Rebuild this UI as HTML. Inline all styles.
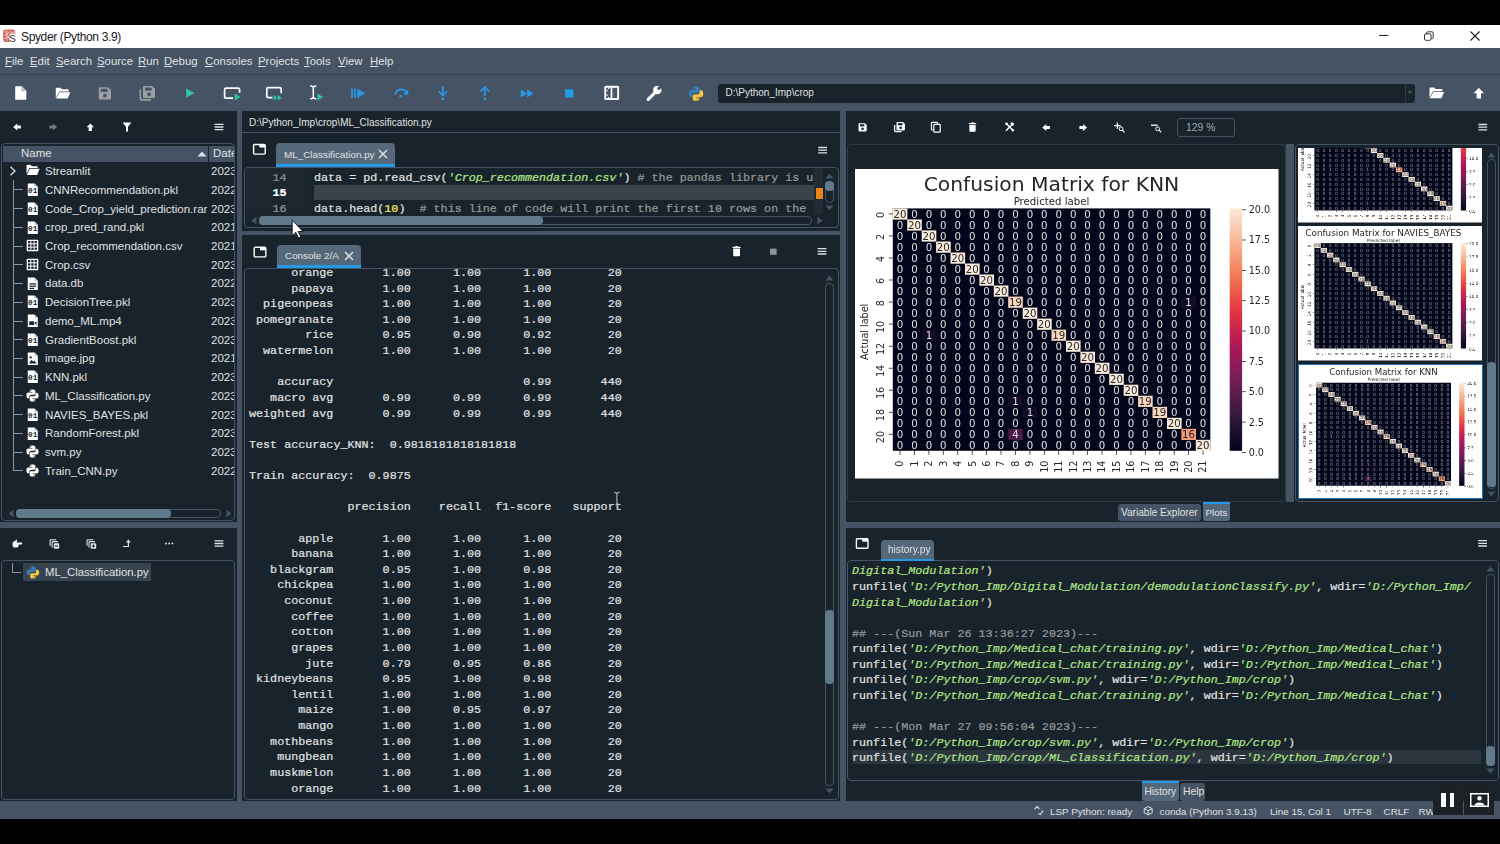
<!DOCTYPE html><html><head><meta charset="utf-8"><title>Spyder (Python 3.9)</title><style>
*{box-sizing:border-box;margin:0;padding:0}
html,body{width:1500px;height:844px;overflow:hidden;background:#000}
body{position:relative;font-family:"Liberation Sans",sans-serif;font-size:12px;color:#E0E1E3}
.a{position:absolute}
.t{position:absolute;white-space:pre;line-height:1}
.ui{font-family:"Liberation Sans",sans-serif;font-size:11.5px;color:#E0E1E3}
.mono{font-family:"Liberation Mono",monospace;font-size:11.72px;-webkit-text-stroke:0.22px;color:#E0E1E3;white-space:pre;position:absolute;line-height:15.6px;height:15.6px}
.box{position:absolute;border:1px solid #455364;border-radius:4px;background:#18232B}
.str{color:#B0E686;font-style:italic}
.num{color:#FAED5C}
.cm{color:#999999}
svg{position:absolute;overflow:visible}
.fig{will-change:transform}
</style></head><body>
<div class="a" style="left:0;top:25px;width:1500px;height:23px;background:#fff"></div>
<div class="t" style="left:21px;top:30.8px;font-size:12px;letter-spacing:-0.36px;color:#1a1a1a">Spyder (Python 3.9)</div>
<div class="a" style="left:0;top:48px;width:1500px;height:63px;background:#455364"></div>
<div class="a" style="left:0;top:74px;width:1500px;height:1px;background:#37434f"></div>
<div class="t ui" style="left:5px;top:56.3px;font-size:11.4px"><u>F</u>ile</div>
<div class="t ui" style="left:30px;top:56.3px;font-size:11.4px"><u>E</u>dit</div>
<div class="t ui" style="left:56px;top:56.3px;font-size:11.4px"><u>S</u>earch</div>
<div class="t ui" style="left:97px;top:56.3px;font-size:11.4px"><u>S</u>ource</div>
<div class="t ui" style="left:138px;top:56.3px;font-size:11.4px"><u>R</u>un</div>
<div class="t ui" style="left:164px;top:56.3px;font-size:11.4px"><u>D</u>ebug</div>
<div class="t ui" style="left:205px;top:56.3px;font-size:11.4px"><u>C</u>onsoles</div>
<div class="t ui" style="left:258px;top:56.3px;font-size:11.4px"><u>P</u>rojects</div>
<div class="t ui" style="left:304px;top:56.3px;font-size:11.4px"><u>T</u>ools</div>
<div class="t ui" style="left:338px;top:56.3px;font-size:11.4px"><u>V</u>iew</div>
<div class="t ui" style="left:370px;top:56.3px;font-size:11.4px"><u>H</u>elp</div>
<div class="a" style="left:0;top:111px;width:1500px;height:690px;background:#18232B"></div>
<div class="a" style="left:0;top:801px;width:1500px;height:17.6px;background:#455364"></div>
<div class="a" style="left:237px;top:111px;width:5px;height:690px;background:#455364"></div>
<div class="a" style="left:840px;top:111px;width:5.7px;height:690px;background:#455364"></div>
<div class="a" style="left:0;top:522px;width:237px;height:5.5px;background:#455364"></div>
<div class="a" style="left:242px;top:230.5px;width:598px;height:4.5px;background:#455364"></div>
<div class="a" style="left:846px;top:522px;width:654px;height:5.5px;background:#455364"></div>
<div class="box" style="left:1px;top:143px;width:234px;height:378px"></div>
<div class="a" style="left:3px;top:146px;width:205px;height:16px;background:#455364"></div>
<div class="a" style="left:209px;top:146px;width:25px;height:16px;background:#455364"></div>
<div class="t ui" style="left:21px;top:148px">Name</div>
<div class="t ui" style="left:213px;top:148px;width:21px;overflow:hidden">Date</div>
<svg style="left:197px;top:151px" width="10" height="6"><path d="M0.5 5.5 L5 0.5 L9.5 5.5Z" fill="#E0E1E3"/></svg>
<svg style="left:26.1px;top:164.4px" width="14" height="12" viewBox="0 0 14 12"><path d="M0.5 1.5 Q0.5 0.8 1.2 0.8 L4.6 0.8 L5.8 2.2 L11 2.2 Q11.6 2.2 11.6 2.9 L11.6 4 L3.2 4 L0.5 10 Z" fill="#fff"/><path d="M3.6 4.8 L13.6 4.8 L11.2 11 L0.9 11 Z" fill="#fff"/></svg>
<div class="t ui" style="left:45px;top:166.1px">Streamlit</div>
<div class="t ui" style="left:211px;top:166.1px;width:23px;overflow:hidden;background:#18232B">2023</div>
<svg style="left:9.2px;top:166.2px" width="8" height="10"><path d="M1.5 0.8 L6 5 L1.5 9.2" fill="none" stroke="#E0E1E3" stroke-width="1.3"/></svg>
<svg style="left:26.1px;top:183.1px" width="13.6" height="13.6" viewBox="0 0 12 13"><path d="M1.2 0.5 L7.6 0.5 L10.8 3.7 L10.8 12.5 L1.2 12.5 Z" fill="#fff"/><path d="M7.6 0.5 L7.6 3.7 L10.8 3.7Z" fill="#b9c0c7"/><text x="1.5" y="9.4" font-family="Liberation Mono,monospace" font-size="7.4" font-weight="bold" fill="#19232D" textLength="9">01</text></svg>
<div class="t ui" style="left:45px;top:184.8px">CNNRecommendation.pkl</div>
<div class="t ui" style="left:211px;top:184.8px;width:23px;overflow:hidden;background:#18232B">2022</div>
<div class="a" style="left:13px;top:189.4px;width:10px;height:1px;background:#8a96a0"></div>
<svg style="left:26.1px;top:201.8px" width="13.6" height="13.6" viewBox="0 0 12 13"><path d="M1.2 0.5 L7.6 0.5 L10.8 3.7 L10.8 12.5 L1.2 12.5 Z" fill="#fff"/><path d="M7.6 0.5 L7.6 3.7 L10.8 3.7Z" fill="#b9c0c7"/><text x="1.5" y="9.4" font-family="Liberation Mono,monospace" font-size="7.4" font-weight="bold" fill="#19232D" textLength="9">01</text></svg>
<div class="t ui" style="left:45px;top:203.5px">Code_Crop_yield_prediction.rar</div>
<div class="t ui" style="left:211px;top:203.5px;width:23px;overflow:hidden;background:#18232B">2023</div>
<div class="a" style="left:13px;top:208.1px;width:10px;height:1px;background:#8a96a0"></div>
<svg style="left:26.1px;top:220.6px" width="13.6" height="13.6" viewBox="0 0 12 13"><path d="M1.2 0.5 L7.6 0.5 L10.8 3.7 L10.8 12.5 L1.2 12.5 Z" fill="#fff"/><path d="M7.6 0.5 L7.6 3.7 L10.8 3.7Z" fill="#b9c0c7"/><text x="1.5" y="9.4" font-family="Liberation Mono,monospace" font-size="7.4" font-weight="bold" fill="#19232D" textLength="9">01</text></svg>
<div class="t ui" style="left:45px;top:222.3px">crop_pred_rand.pkl</div>
<div class="t ui" style="left:211px;top:222.3px;width:23px;overflow:hidden;background:#18232B">2021</div>
<div class="a" style="left:13px;top:226.9px;width:10px;height:1px;background:#8a96a0"></div>
<svg style="left:26.1px;top:239.3px" width="13" height="13" viewBox="0 0 13 13"><rect x="0.7" y="0.7" width="11.6" height="11.6" rx="1" fill="#fff"/><g fill="#19232D"><rect x="2" y="2" width="2.3" height="2.3"/><rect x="5.3" y="2" width="2.3" height="2.3"/><rect x="8.6" y="2" width="2.3" height="2.3"/><rect x="2" y="5.3" width="2.3" height="2.3"/><rect x="5.3" y="5.3" width="2.3" height="2.3"/><rect x="8.6" y="5.3" width="2.3" height="2.3"/><rect x="2" y="8.6" width="2.3" height="2.3"/><rect x="5.3" y="8.6" width="2.3" height="2.3"/><rect x="8.6" y="8.6" width="2.3" height="2.3"/></g></svg>
<div class="t ui" style="left:45px;top:241.0px">Crop_recommendation.csv</div>
<div class="t ui" style="left:211px;top:241.0px;width:23px;overflow:hidden;background:#18232B">2021</div>
<div class="a" style="left:13px;top:245.6px;width:10px;height:1px;background:#8a96a0"></div>
<svg style="left:26.1px;top:258.0px" width="13" height="13" viewBox="0 0 13 13"><rect x="0.7" y="0.7" width="11.6" height="11.6" rx="1" fill="#fff"/><g fill="#19232D"><rect x="2" y="2" width="2.3" height="2.3"/><rect x="5.3" y="2" width="2.3" height="2.3"/><rect x="8.6" y="2" width="2.3" height="2.3"/><rect x="2" y="5.3" width="2.3" height="2.3"/><rect x="5.3" y="5.3" width="2.3" height="2.3"/><rect x="8.6" y="5.3" width="2.3" height="2.3"/><rect x="2" y="8.6" width="2.3" height="2.3"/><rect x="5.3" y="8.6" width="2.3" height="2.3"/><rect x="8.6" y="8.6" width="2.3" height="2.3"/></g></svg>
<div class="t ui" style="left:45px;top:259.7px">Crop.csv</div>
<div class="t ui" style="left:211px;top:259.7px;width:23px;overflow:hidden;background:#18232B">2023</div>
<div class="a" style="left:13px;top:264.3px;width:10px;height:1px;background:#8a96a0"></div>
<svg style="left:26.1px;top:276.7px" width="13.6" height="13.6" viewBox="0 0 12 13"><path d="M1.2 0.5 L7.6 0.5 L10.8 3.7 L10.8 12.5 L1.2 12.5 Z" fill="#fff"/><path d="M7.6 0.5 L7.6 3.7 L10.8 3.7Z" fill="#b9c0c7"/><g fill="#19232D"><rect x="2.8" y="6" width="6.4" height="1.2"/><rect x="2.8" y="8.2" width="6.4" height="1.2"/><rect x="2.8" y="10.3" width="4.5" height="1.2"/></g></svg>
<div class="t ui" style="left:45px;top:278.4px">data.db</div>
<div class="t ui" style="left:211px;top:278.4px;width:23px;overflow:hidden;background:#18232B">2022</div>
<div class="a" style="left:13px;top:283.0px;width:10px;height:1px;background:#8a96a0"></div>
<svg style="left:26.1px;top:295.4px" width="13.6" height="13.6" viewBox="0 0 12 13"><path d="M1.2 0.5 L7.6 0.5 L10.8 3.7 L10.8 12.5 L1.2 12.5 Z" fill="#fff"/><path d="M7.6 0.5 L7.6 3.7 L10.8 3.7Z" fill="#b9c0c7"/><text x="1.5" y="9.4" font-family="Liberation Mono,monospace" font-size="7.4" font-weight="bold" fill="#19232D" textLength="9">01</text></svg>
<div class="t ui" style="left:45px;top:297.1px">DecisionTree.pkl</div>
<div class="t ui" style="left:211px;top:297.1px;width:23px;overflow:hidden;background:#18232B">2023</div>
<div class="a" style="left:13px;top:301.7px;width:10px;height:1px;background:#8a96a0"></div>
<svg style="left:26.1px;top:314.2px" width="13.6" height="13.6" viewBox="0 0 12 13"><path d="M1.2 0.5 L7.6 0.5 L10.8 3.7 L10.8 12.5 L1.2 12.5 Z" fill="#fff"/><path d="M7.6 0.5 L7.6 3.7 L10.8 3.7Z" fill="#b9c0c7"/><g fill="#19232D"><rect x="2.6" y="7" width="4.6" height="3.6"/><path d="M7.4 8.6 L9.6 7 L9.6 10.6Z"/></g></svg>
<div class="t ui" style="left:45px;top:315.9px">demo_ML.mp4</div>
<div class="t ui" style="left:211px;top:315.9px;width:23px;overflow:hidden;background:#18232B">2023</div>
<div class="a" style="left:13px;top:320.5px;width:10px;height:1px;background:#8a96a0"></div>
<svg style="left:26.1px;top:332.9px" width="13.6" height="13.6" viewBox="0 0 12 13"><path d="M1.2 0.5 L7.6 0.5 L10.8 3.7 L10.8 12.5 L1.2 12.5 Z" fill="#fff"/><path d="M7.6 0.5 L7.6 3.7 L10.8 3.7Z" fill="#b9c0c7"/><text x="1.5" y="9.4" font-family="Liberation Mono,monospace" font-size="7.4" font-weight="bold" fill="#19232D" textLength="9">01</text></svg>
<div class="t ui" style="left:45px;top:334.6px">GradientBoost.pkl</div>
<div class="t ui" style="left:211px;top:334.6px;width:23px;overflow:hidden;background:#18232B">2023</div>
<div class="a" style="left:13px;top:339.2px;width:10px;height:1px;background:#8a96a0"></div>
<svg style="left:26.1px;top:351.6px" width="13.6" height="13.6" viewBox="0 0 12 13"><path d="M1.2 0.5 L7.6 0.5 L10.8 3.7 L10.8 12.5 L1.2 12.5 Z" fill="#fff"/><path d="M7.6 0.5 L7.6 3.7 L10.8 3.7Z" fill="#b9c0c7"/><g fill="#19232D"><path d="M2.4 11 L4.8 7.4 L6.4 9.4 L7.6 8.2 L9.6 11Z"/><circle cx="4" cy="5.2" r="1.1"/></g></svg>
<div class="t ui" style="left:45px;top:353.3px">image.jpg</div>
<div class="t ui" style="left:211px;top:353.3px;width:23px;overflow:hidden;background:#18232B">2021</div>
<div class="a" style="left:13px;top:357.9px;width:10px;height:1px;background:#8a96a0"></div>
<svg style="left:26.1px;top:370.3px" width="13.6" height="13.6" viewBox="0 0 12 13"><path d="M1.2 0.5 L7.6 0.5 L10.8 3.7 L10.8 12.5 L1.2 12.5 Z" fill="#fff"/><path d="M7.6 0.5 L7.6 3.7 L10.8 3.7Z" fill="#b9c0c7"/><text x="1.5" y="9.4" font-family="Liberation Mono,monospace" font-size="7.4" font-weight="bold" fill="#19232D" textLength="9">01</text></svg>
<div class="t ui" style="left:45px;top:372.0px">KNN.pkl</div>
<div class="t ui" style="left:211px;top:372.0px;width:23px;overflow:hidden;background:#18232B">2023</div>
<div class="a" style="left:13px;top:376.6px;width:10px;height:1px;background:#8a96a0"></div>
<svg style="left:26.1px;top:389.0px" width="13" height="13" viewBox="0 0 13 13"><path d="M6.3 0.4 C3.6 0.4 3.8 1.6 3.8 1.6 L3.8 3 L6.5 3 L6.5 3.5 L2.4 3.5 C0.6 3.5 0.4 5 0.4 6.4 C0.4 7.9 0.8 9.3 2.3 9.3 L3.4 9.3 L3.4 7.6 C3.4 6.4 4.4 5.7 5.4 5.7 L7.8 5.7 C8.8 5.7 9.3 5 9.3 4.2 L9.3 1.8 C9.3 1 8.4 0.4 6.3 0.4Z M4.9 1.3 A0.55 0.55 0 1 1 4.9 2.4 A0.55 0.55 0 1 1 4.9 1.3Z" fill="#fff" fill-rule="evenodd"/><path d="M6.7 12.6 C9.4 12.6 9.2 11.4 9.2 11.4 L9.2 10 L6.5 10 L6.5 9.5 L10.6 9.5 C12.4 9.5 12.6 8 12.6 6.6 C12.6 5.1 12.2 3.7 10.7 3.7 L9.6 3.7 L9.6 5.4 C9.6 6.6 8.6 7.3 7.6 7.3 L5.2 7.3 C4.2 7.3 3.7 8 3.7 8.8 L3.7 11.2 C3.7 12 4.6 12.6 6.7 12.6Z M8.1 11.7 A0.55 0.55 0 1 1 8.1 10.6 A0.55 0.55 0 1 1 8.1 11.7Z" fill="#fff" fill-rule="evenodd"/></svg>
<div class="t ui" style="left:45px;top:390.7px">ML_Classification.py</div>
<div class="t ui" style="left:211px;top:390.7px;width:23px;overflow:hidden;background:#18232B">2023</div>
<div class="a" style="left:13px;top:395.3px;width:10px;height:1px;background:#8a96a0"></div>
<svg style="left:26.1px;top:407.8px" width="13.6" height="13.6" viewBox="0 0 12 13"><path d="M1.2 0.5 L7.6 0.5 L10.8 3.7 L10.8 12.5 L1.2 12.5 Z" fill="#fff"/><path d="M7.6 0.5 L7.6 3.7 L10.8 3.7Z" fill="#b9c0c7"/><text x="1.5" y="9.4" font-family="Liberation Mono,monospace" font-size="7.4" font-weight="bold" fill="#19232D" textLength="9">01</text></svg>
<div class="t ui" style="left:45px;top:409.5px">NAVIES_BAYES.pkl</div>
<div class="t ui" style="left:211px;top:409.5px;width:23px;overflow:hidden;background:#18232B">2023</div>
<div class="a" style="left:13px;top:414.1px;width:10px;height:1px;background:#8a96a0"></div>
<svg style="left:26.1px;top:426.5px" width="13.6" height="13.6" viewBox="0 0 12 13"><path d="M1.2 0.5 L7.6 0.5 L10.8 3.7 L10.8 12.5 L1.2 12.5 Z" fill="#fff"/><path d="M7.6 0.5 L7.6 3.7 L10.8 3.7Z" fill="#b9c0c7"/><text x="1.5" y="9.4" font-family="Liberation Mono,monospace" font-size="7.4" font-weight="bold" fill="#19232D" textLength="9">01</text></svg>
<div class="t ui" style="left:45px;top:428.2px">RandomForest.pkl</div>
<div class="t ui" style="left:211px;top:428.2px;width:23px;overflow:hidden;background:#18232B">2023</div>
<div class="a" style="left:13px;top:432.8px;width:10px;height:1px;background:#8a96a0"></div>
<svg style="left:26.1px;top:445.2px" width="13" height="13" viewBox="0 0 13 13"><path d="M6.3 0.4 C3.6 0.4 3.8 1.6 3.8 1.6 L3.8 3 L6.5 3 L6.5 3.5 L2.4 3.5 C0.6 3.5 0.4 5 0.4 6.4 C0.4 7.9 0.8 9.3 2.3 9.3 L3.4 9.3 L3.4 7.6 C3.4 6.4 4.4 5.7 5.4 5.7 L7.8 5.7 C8.8 5.7 9.3 5 9.3 4.2 L9.3 1.8 C9.3 1 8.4 0.4 6.3 0.4Z M4.9 1.3 A0.55 0.55 0 1 1 4.9 2.4 A0.55 0.55 0 1 1 4.9 1.3Z" fill="#fff" fill-rule="evenodd"/><path d="M6.7 12.6 C9.4 12.6 9.2 11.4 9.2 11.4 L9.2 10 L6.5 10 L6.5 9.5 L10.6 9.5 C12.4 9.5 12.6 8 12.6 6.6 C12.6 5.1 12.2 3.7 10.7 3.7 L9.6 3.7 L9.6 5.4 C9.6 6.6 8.6 7.3 7.6 7.3 L5.2 7.3 C4.2 7.3 3.7 8 3.7 8.8 L3.7 11.2 C3.7 12 4.6 12.6 6.7 12.6Z M8.1 11.7 A0.55 0.55 0 1 1 8.1 10.6 A0.55 0.55 0 1 1 8.1 11.7Z" fill="#fff" fill-rule="evenodd"/></svg>
<div class="t ui" style="left:45px;top:446.9px">svm.py</div>
<div class="t ui" style="left:211px;top:446.9px;width:23px;overflow:hidden;background:#18232B">2023</div>
<div class="a" style="left:13px;top:451.5px;width:10px;height:1px;background:#8a96a0"></div>
<svg style="left:26.1px;top:463.9px" width="13" height="13" viewBox="0 0 13 13"><path d="M6.3 0.4 C3.6 0.4 3.8 1.6 3.8 1.6 L3.8 3 L6.5 3 L6.5 3.5 L2.4 3.5 C0.6 3.5 0.4 5 0.4 6.4 C0.4 7.9 0.8 9.3 2.3 9.3 L3.4 9.3 L3.4 7.6 C3.4 6.4 4.4 5.7 5.4 5.7 L7.8 5.7 C8.8 5.7 9.3 5 9.3 4.2 L9.3 1.8 C9.3 1 8.4 0.4 6.3 0.4Z M4.9 1.3 A0.55 0.55 0 1 1 4.9 2.4 A0.55 0.55 0 1 1 4.9 1.3Z" fill="#fff" fill-rule="evenodd"/><path d="M6.7 12.6 C9.4 12.6 9.2 11.4 9.2 11.4 L9.2 10 L6.5 10 L6.5 9.5 L10.6 9.5 C12.4 9.5 12.6 8 12.6 6.6 C12.6 5.1 12.2 3.7 10.7 3.7 L9.6 3.7 L9.6 5.4 C9.6 6.6 8.6 7.3 7.6 7.3 L5.2 7.3 C4.2 7.3 3.7 8 3.7 8.8 L3.7 11.2 C3.7 12 4.6 12.6 6.7 12.6Z M8.1 11.7 A0.55 0.55 0 1 1 8.1 10.6 A0.55 0.55 0 1 1 8.1 11.7Z" fill="#fff" fill-rule="evenodd"/></svg>
<div class="t ui" style="left:45px;top:465.6px">Train_CNN.py</div>
<div class="t ui" style="left:211px;top:465.6px;width:23px;overflow:hidden;background:#18232B">2022</div>
<div class="a" style="left:13px;top:470.2px;width:10px;height:1px;background:#8a96a0"></div>
<div class="a" style="left:12.6px;top:180px;width:1px;height:290.7px;background:#8a96a0"></div>
<svg style="left:8px;top:509px" width="6" height="9"><path d="M5.5 0.5 L0.5 4.5 L5.5 8.5Z" fill="#455364"/></svg>
<svg style="left:226px;top:509px" width="6" height="9"><path d="M0.5 0.5 L5.5 4.5 L0.5 8.5Z" fill="#455364"/></svg>
<div class="a" style="left:16px;top:509px;width:205px;height:9px;border:1px solid #455364;border-radius:4px"></div>
<div class="a" style="left:16px;top:509px;width:155px;height:9px;background:#60798B;border-radius:4px"></div>
<div class="box" style="left:1px;top:560px;width:234px;height:240px"></div>
<div class="a" style="left:23px;top:563.2px;width:128px;height:18.3px;background:#37434F"></div>
<div class="a" style="left:12px;top:563px;width:1px;height:10px;background:#8a96a0"></div><div class="a" style="left:12px;top:572px;width:9px;height:1px;background:#8a96a0"></div>
<div class="t ui" style="left:45px;top:567.4px;font-size:11.3px">ML_Classification.py</div>
<div class="t ui" style="left:249px;top:117.7px;font-size:10px">D:\Python_Imp\crop\ML_Classification.py</div>
<div class="a" style="left:242px;top:132px;width:598px;height:1px;background:#455364"></div>
<div class="a" style="left:276px;top:143px;width:119px;height:24px;background:#54687A;border-radius:4px 4px 0 0;border-bottom:3px solid #259AE9"></div>
<div class="t ui" style="left:284px;top:149.5px;font-size:9.9px">ML_Classification.py</div>
<svg style="left:378px;top:149px" width="10" height="10"><path d="M1 1 L9 9 M9 1 L1 9" stroke="#E0E1E3" stroke-width="1.5"/></svg>
<div class="box" style="left:244px;top:167px;width:595px;height:61px"></div>
<div class="a" style="left:245px;top:168px;width:66px;height:46.5px;background:#1c2730;border-radius:3px 0 0 0"></div>
<div class="a" style="left:314px;top:185px;width:507px;height:15.3px;background:#3a434a"></div>
<div class="mono" style="left:245px;top:171.2px;width:41.5px;text-align:right;color:#8b949c">14</div>
<div class="mono" style="left:245px;top:186.2px;width:41.5px;text-align:right;color:#fff;font-weight:bold">15</div>
<div class="mono" style="left:245px;top:202.2px;width:41.5px;text-align:right;color:#8b949c">16</div>
<div class="mono" style="left:314px;top:171.2px;width:500px;overflow:hidden">data = pd.read_csv(<span class="str">'Crop_recommendation.csv'</span>) <span class="cm"># the pandas library is used</span></div>
<div class="mono" style="left:314px;top:202.2px;width:494px;overflow:hidden">data.head(<span class="num">10</span>)  <span class="cm"># this line of code will print the first 10 rows on the screen</span></div>
<div class="a" style="left:813.7px;top:168px;width:9.8px;height:46px;background:#212b33"></div>
<div class="a" style="left:815.5px;top:188px;width:7px;height:11px;background:#E8861A"></div>
<svg style="left:825px;top:173px" width="9" height="6"><path d="M0.5 5.5 L4.5 0.5 L8.5 5.5Z" fill="#455364"/></svg>
<svg style="left:825px;top:205px" width="9" height="6"><path d="M0.5 0.5 L4.5 5.5 L8.5 0.5Z" fill="#455364"/></svg>
<div class="a" style="left:825px;top:181px;width:9px;height:22px;border:1px solid #455364;border-radius:4px"></div>
<div class="a" style="left:825px;top:181px;width:9px;height:9.5px;background:#60798B;border-radius:4px"></div>
<svg style="left:251px;top:216px" width="6" height="9"><path d="M5.5 0.5 L0.5 4.5 L5.5 8.5Z" fill="#455364"/></svg>
<svg style="left:817px;top:216px" width="6" height="9"><path d="M0.5 0.5 L5.5 4.5 L0.5 8.5Z" fill="#455364"/></svg>
<div class="a" style="left:259px;top:216px;width:553px;height:9px;border:1px solid #455364;border-radius:4px"></div>
<div class="a" style="left:259px;top:216px;width:284px;height:9px;background:#60798B;border-radius:4px"></div>
<div class="a" style="left:277px;top:245px;width:84px;height:23px;background:#54687A;border-radius:4px 4px 0 0;border-bottom:3px solid #259AE9"></div>
<div class="t ui" style="left:285px;top:251px;font-size:9.9px">Console 2/A</div>
<svg style="left:344px;top:251px" width="10" height="10"><path d="M1 1 L9 9 M9 1 L1 9" stroke="#E0E1E3" stroke-width="1.5"/></svg>
<div class="box" style="left:244px;top:268px;width:595px;height:532px"></div>
<div class="a" style="left:245px;top:269px;width:575px;height:530px;overflow:hidden">
<div class="mono" style="left:4px;top:-3.1px">      orange       1.00      1.00      1.00        20</div>
<div class="mono" style="left:4px;top:12.5px">      papaya       1.00      1.00      1.00        20</div>
<div class="mono" style="left:4px;top:28.1px">  pigeonpeas       1.00      1.00      1.00        20</div>
<div class="mono" style="left:4px;top:43.8px"> pomegranate       1.00      1.00      1.00        20</div>
<div class="mono" style="left:4px;top:59.4px">        rice       0.95      0.90      0.92        20</div>
<div class="mono" style="left:4px;top:75.0px">  watermelon       1.00      1.00      1.00        20</div>
<div class="mono" style="left:4px;top:106.3px">    accuracy                           0.99       440</div>
<div class="mono" style="left:4px;top:121.9px">   macro avg       0.99      0.99      0.99       440</div>
<div class="mono" style="left:4px;top:137.5px">weighted avg       0.99      0.99      0.99       440</div>
<div class="mono" style="left:4px;top:168.8px">Test accuracy_KNN:  0.9818181818181818</div>
<div class="mono" style="left:4px;top:200.0px">Train accuracy:  0.9875</div>
<div class="mono" style="left:4px;top:231.3px">              precision    recall  f1-score   support</div>
<div class="mono" style="left:4px;top:262.5px">       apple       1.00      1.00      1.00        20</div>
<div class="mono" style="left:4px;top:278.2px">      banana       1.00      1.00      1.00        20</div>
<div class="mono" style="left:4px;top:293.8px">   blackgram       0.95      1.00      0.98        20</div>
<div class="mono" style="left:4px;top:309.4px">    chickpea       1.00      1.00      1.00        20</div>
<div class="mono" style="left:4px;top:325.0px">     coconut       1.00      1.00      1.00        20</div>
<div class="mono" style="left:4px;top:340.7px">      coffee       1.00      1.00      1.00        20</div>
<div class="mono" style="left:4px;top:356.3px">      cotton       1.00      1.00      1.00        20</div>
<div class="mono" style="left:4px;top:371.9px">      grapes       1.00      1.00      1.00        20</div>
<div class="mono" style="left:4px;top:387.5px">        jute       0.79      0.95      0.86        20</div>
<div class="mono" style="left:4px;top:403.2px"> kidneybeans       0.95      1.00      0.98        20</div>
<div class="mono" style="left:4px;top:418.8px">      lentil       1.00      1.00      1.00        20</div>
<div class="mono" style="left:4px;top:434.4px">       maize       1.00      0.95      0.97        20</div>
<div class="mono" style="left:4px;top:450.0px">       mango       1.00      1.00      1.00        20</div>
<div class="mono" style="left:4px;top:465.7px">   mothbeans       1.00      1.00      1.00        20</div>
<div class="mono" style="left:4px;top:481.3px">    mungbean       1.00      1.00      1.00        20</div>
<div class="mono" style="left:4px;top:496.9px">   muskmelon       1.00      1.00      1.00        20</div>
<div class="mono" style="left:4px;top:512.5px">      orange       1.00      1.00      1.00        20</div>
</div>
<svg style="left:825px;top:275px" width="9" height="6"><path d="M0.5 5.5 L4.5 0.5 L8.5 5.5Z" fill="#455364"/></svg>
<svg style="left:825px;top:788px" width="9" height="6"><path d="M0.5 0.5 L4.5 5.5 L8.5 0.5Z" fill="#455364"/></svg>
<div class="a" style="left:825px;top:283px;width:9px;height:503px;border:1px solid #455364;border-radius:4px"></div>
<div class="a" style="left:825px;top:610px;width:9px;height:74px;background:#60798B;border-radius:4px"></div>
<div class="box" style="left:847px;top:144px;width:439px;height:358px;border-radius:4px;border-color:#2d3a47"></div>
<svg class="fig" style="left:854.5px;top:168.5px" width="423.5" height="309.5" viewBox="0 0 423.5 309.5"><rect width="423.5" height="309.5" fill="#fff"/>
<rect x="37.8" y="39.4" width="317.5" height="242.4" fill="#03051a"/>
<rect x="37.8" y="39.4" width="14.6" height="11.2" fill="#faebdd"/>
<rect x="52.2" y="50.4" width="14.6" height="11.2" fill="#faebdd"/>
<rect x="66.7" y="61.4" width="14.6" height="11.2" fill="#faebdd"/>
<rect x="81.1" y="72.5" width="14.6" height="11.2" fill="#faebdd"/>
<rect x="95.5" y="83.5" width="14.6" height="11.2" fill="#faebdd"/>
<rect x="110.0" y="94.5" width="14.6" height="11.2" fill="#faebdd"/>
<rect x="124.4" y="105.5" width="14.6" height="11.2" fill="#faebdd"/>
<rect x="138.8" y="116.5" width="14.6" height="11.2" fill="#faebdd"/>
<rect x="153.2" y="127.6" width="14.6" height="11.2" fill="#f9d8c2"/>
<rect x="167.7" y="138.6" width="14.6" height="11.2" fill="#faebdd"/>
<rect x="182.1" y="149.6" width="14.6" height="11.2" fill="#faebdd"/>
<rect x="196.5" y="160.6" width="14.6" height="11.2" fill="#f9d8c2"/>
<rect x="211.0" y="171.6" width="14.6" height="11.2" fill="#faebdd"/>
<rect x="225.4" y="182.7" width="14.6" height="11.2" fill="#faebdd"/>
<rect x="239.8" y="193.7" width="14.6" height="11.2" fill="#faebdd"/>
<rect x="254.2" y="204.7" width="14.6" height="11.2" fill="#faebdd"/>
<rect x="268.7" y="215.7" width="14.6" height="11.2" fill="#faebdd"/>
<rect x="283.1" y="226.7" width="14.6" height="11.2" fill="#f9d8c2"/>
<rect x="297.5" y="237.8" width="14.6" height="11.2" fill="#f9d8c2"/>
<rect x="312.0" y="248.8" width="14.6" height="11.2" fill="#faebdd"/>
<rect x="326.4" y="259.8" width="14.6" height="11.2" fill="#f59b76"/>
<rect x="340.8" y="270.8" width="14.6" height="11.2" fill="#faebdd"/>
<rect x="326.4" y="127.6" width="14.6" height="11.2" fill="#140c27"/>
<rect x="66.7" y="160.6" width="14.6" height="11.2" fill="#140c27"/>
<rect x="153.2" y="226.7" width="14.6" height="11.2" fill="#140c27"/>
<rect x="167.7" y="237.8" width="14.6" height="11.2" fill="#140c27"/>
<rect x="153.2" y="259.8" width="14.6" height="11.2" fill="#4d1b48"/>
<g font-family="DejaVu Sans,sans-serif" font-size="10.2" text-anchor="middle" fill="#e0e0e0">
<text x="45.0" y="48.7" fill="#262626">20</text>
<text x="59.4" y="48.7">0</text>
<text x="73.9" y="48.7">0</text>
<text x="88.3" y="48.7">0</text>
<text x="102.7" y="48.7">0</text>
<text x="117.2" y="48.7">0</text>
<text x="131.6" y="48.7">0</text>
<text x="146.0" y="48.7">0</text>
<text x="160.5" y="48.7">0</text>
<text x="174.9" y="48.7">0</text>
<text x="189.3" y="48.7">0</text>
<text x="203.7" y="48.7">0</text>
<text x="218.2" y="48.7">0</text>
<text x="232.6" y="48.7">0</text>
<text x="247.0" y="48.7">0</text>
<text x="261.5" y="48.7">0</text>
<text x="275.9" y="48.7">0</text>
<text x="290.3" y="48.7">0</text>
<text x="304.8" y="48.7">0</text>
<text x="319.2" y="48.7">0</text>
<text x="333.6" y="48.7">0</text>
<text x="348.0" y="48.7">0</text>
<text x="45.0" y="59.7">0</text>
<text x="59.4" y="59.7" fill="#262626">20</text>
<text x="73.9" y="59.7">0</text>
<text x="88.3" y="59.7">0</text>
<text x="102.7" y="59.7">0</text>
<text x="117.2" y="59.7">0</text>
<text x="131.6" y="59.7">0</text>
<text x="146.0" y="59.7">0</text>
<text x="160.5" y="59.7">0</text>
<text x="174.9" y="59.7">0</text>
<text x="189.3" y="59.7">0</text>
<text x="203.7" y="59.7">0</text>
<text x="218.2" y="59.7">0</text>
<text x="232.6" y="59.7">0</text>
<text x="247.0" y="59.7">0</text>
<text x="261.5" y="59.7">0</text>
<text x="275.9" y="59.7">0</text>
<text x="290.3" y="59.7">0</text>
<text x="304.8" y="59.7">0</text>
<text x="319.2" y="59.7">0</text>
<text x="333.6" y="59.7">0</text>
<text x="348.0" y="59.7">0</text>
<text x="45.0" y="70.7">0</text>
<text x="59.4" y="70.7">0</text>
<text x="73.9" y="70.7" fill="#262626">20</text>
<text x="88.3" y="70.7">0</text>
<text x="102.7" y="70.7">0</text>
<text x="117.2" y="70.7">0</text>
<text x="131.6" y="70.7">0</text>
<text x="146.0" y="70.7">0</text>
<text x="160.5" y="70.7">0</text>
<text x="174.9" y="70.7">0</text>
<text x="189.3" y="70.7">0</text>
<text x="203.7" y="70.7">0</text>
<text x="218.2" y="70.7">0</text>
<text x="232.6" y="70.7">0</text>
<text x="247.0" y="70.7">0</text>
<text x="261.5" y="70.7">0</text>
<text x="275.9" y="70.7">0</text>
<text x="290.3" y="70.7">0</text>
<text x="304.8" y="70.7">0</text>
<text x="319.2" y="70.7">0</text>
<text x="333.6" y="70.7">0</text>
<text x="348.0" y="70.7">0</text>
<text x="45.0" y="81.8">0</text>
<text x="59.4" y="81.8">0</text>
<text x="73.9" y="81.8">0</text>
<text x="88.3" y="81.8" fill="#262626">20</text>
<text x="102.7" y="81.8">0</text>
<text x="117.2" y="81.8">0</text>
<text x="131.6" y="81.8">0</text>
<text x="146.0" y="81.8">0</text>
<text x="160.5" y="81.8">0</text>
<text x="174.9" y="81.8">0</text>
<text x="189.3" y="81.8">0</text>
<text x="203.7" y="81.8">0</text>
<text x="218.2" y="81.8">0</text>
<text x="232.6" y="81.8">0</text>
<text x="247.0" y="81.8">0</text>
<text x="261.5" y="81.8">0</text>
<text x="275.9" y="81.8">0</text>
<text x="290.3" y="81.8">0</text>
<text x="304.8" y="81.8">0</text>
<text x="319.2" y="81.8">0</text>
<text x="333.6" y="81.8">0</text>
<text x="348.0" y="81.8">0</text>
<text x="45.0" y="92.8">0</text>
<text x="59.4" y="92.8">0</text>
<text x="73.9" y="92.8">0</text>
<text x="88.3" y="92.8">0</text>
<text x="102.7" y="92.8" fill="#262626">20</text>
<text x="117.2" y="92.8">0</text>
<text x="131.6" y="92.8">0</text>
<text x="146.0" y="92.8">0</text>
<text x="160.5" y="92.8">0</text>
<text x="174.9" y="92.8">0</text>
<text x="189.3" y="92.8">0</text>
<text x="203.7" y="92.8">0</text>
<text x="218.2" y="92.8">0</text>
<text x="232.6" y="92.8">0</text>
<text x="247.0" y="92.8">0</text>
<text x="261.5" y="92.8">0</text>
<text x="275.9" y="92.8">0</text>
<text x="290.3" y="92.8">0</text>
<text x="304.8" y="92.8">0</text>
<text x="319.2" y="92.8">0</text>
<text x="333.6" y="92.8">0</text>
<text x="348.0" y="92.8">0</text>
<text x="45.0" y="103.8">0</text>
<text x="59.4" y="103.8">0</text>
<text x="73.9" y="103.8">0</text>
<text x="88.3" y="103.8">0</text>
<text x="102.7" y="103.8">0</text>
<text x="117.2" y="103.8" fill="#262626">20</text>
<text x="131.6" y="103.8">0</text>
<text x="146.0" y="103.8">0</text>
<text x="160.5" y="103.8">0</text>
<text x="174.9" y="103.8">0</text>
<text x="189.3" y="103.8">0</text>
<text x="203.7" y="103.8">0</text>
<text x="218.2" y="103.8">0</text>
<text x="232.6" y="103.8">0</text>
<text x="247.0" y="103.8">0</text>
<text x="261.5" y="103.8">0</text>
<text x="275.9" y="103.8">0</text>
<text x="290.3" y="103.8">0</text>
<text x="304.8" y="103.8">0</text>
<text x="319.2" y="103.8">0</text>
<text x="333.6" y="103.8">0</text>
<text x="348.0" y="103.8">0</text>
<text x="45.0" y="114.8">0</text>
<text x="59.4" y="114.8">0</text>
<text x="73.9" y="114.8">0</text>
<text x="88.3" y="114.8">0</text>
<text x="102.7" y="114.8">0</text>
<text x="117.2" y="114.8">0</text>
<text x="131.6" y="114.8" fill="#262626">20</text>
<text x="146.0" y="114.8">0</text>
<text x="160.5" y="114.8">0</text>
<text x="174.9" y="114.8">0</text>
<text x="189.3" y="114.8">0</text>
<text x="203.7" y="114.8">0</text>
<text x="218.2" y="114.8">0</text>
<text x="232.6" y="114.8">0</text>
<text x="247.0" y="114.8">0</text>
<text x="261.5" y="114.8">0</text>
<text x="275.9" y="114.8">0</text>
<text x="290.3" y="114.8">0</text>
<text x="304.8" y="114.8">0</text>
<text x="319.2" y="114.8">0</text>
<text x="333.6" y="114.8">0</text>
<text x="348.0" y="114.8">0</text>
<text x="45.0" y="125.8">0</text>
<text x="59.4" y="125.8">0</text>
<text x="73.9" y="125.8">0</text>
<text x="88.3" y="125.8">0</text>
<text x="102.7" y="125.8">0</text>
<text x="117.2" y="125.8">0</text>
<text x="131.6" y="125.8">0</text>
<text x="146.0" y="125.8" fill="#262626">20</text>
<text x="160.5" y="125.8">0</text>
<text x="174.9" y="125.8">0</text>
<text x="189.3" y="125.8">0</text>
<text x="203.7" y="125.8">0</text>
<text x="218.2" y="125.8">0</text>
<text x="232.6" y="125.8">0</text>
<text x="247.0" y="125.8">0</text>
<text x="261.5" y="125.8">0</text>
<text x="275.9" y="125.8">0</text>
<text x="290.3" y="125.8">0</text>
<text x="304.8" y="125.8">0</text>
<text x="319.2" y="125.8">0</text>
<text x="333.6" y="125.8">0</text>
<text x="348.0" y="125.8">0</text>
<text x="45.0" y="136.9">0</text>
<text x="59.4" y="136.9">0</text>
<text x="73.9" y="136.9">0</text>
<text x="88.3" y="136.9">0</text>
<text x="102.7" y="136.9">0</text>
<text x="117.2" y="136.9">0</text>
<text x="131.6" y="136.9">0</text>
<text x="146.0" y="136.9">0</text>
<text x="160.5" y="136.9" fill="#262626">19</text>
<text x="174.9" y="136.9">0</text>
<text x="189.3" y="136.9">0</text>
<text x="203.7" y="136.9">0</text>
<text x="218.2" y="136.9">0</text>
<text x="232.6" y="136.9">0</text>
<text x="247.0" y="136.9">0</text>
<text x="261.5" y="136.9">0</text>
<text x="275.9" y="136.9">0</text>
<text x="290.3" y="136.9">0</text>
<text x="304.8" y="136.9">0</text>
<text x="319.2" y="136.9">0</text>
<text x="333.6" y="136.9">1</text>
<text x="348.0" y="136.9">0</text>
<text x="45.0" y="147.9">0</text>
<text x="59.4" y="147.9">0</text>
<text x="73.9" y="147.9">0</text>
<text x="88.3" y="147.9">0</text>
<text x="102.7" y="147.9">0</text>
<text x="117.2" y="147.9">0</text>
<text x="131.6" y="147.9">0</text>
<text x="146.0" y="147.9">0</text>
<text x="160.5" y="147.9">0</text>
<text x="174.9" y="147.9" fill="#262626">20</text>
<text x="189.3" y="147.9">0</text>
<text x="203.7" y="147.9">0</text>
<text x="218.2" y="147.9">0</text>
<text x="232.6" y="147.9">0</text>
<text x="247.0" y="147.9">0</text>
<text x="261.5" y="147.9">0</text>
<text x="275.9" y="147.9">0</text>
<text x="290.3" y="147.9">0</text>
<text x="304.8" y="147.9">0</text>
<text x="319.2" y="147.9">0</text>
<text x="333.6" y="147.9">0</text>
<text x="348.0" y="147.9">0</text>
<text x="45.0" y="158.9">0</text>
<text x="59.4" y="158.9">0</text>
<text x="73.9" y="158.9">0</text>
<text x="88.3" y="158.9">0</text>
<text x="102.7" y="158.9">0</text>
<text x="117.2" y="158.9">0</text>
<text x="131.6" y="158.9">0</text>
<text x="146.0" y="158.9">0</text>
<text x="160.5" y="158.9">0</text>
<text x="174.9" y="158.9">0</text>
<text x="189.3" y="158.9" fill="#262626">20</text>
<text x="203.7" y="158.9">0</text>
<text x="218.2" y="158.9">0</text>
<text x="232.6" y="158.9">0</text>
<text x="247.0" y="158.9">0</text>
<text x="261.5" y="158.9">0</text>
<text x="275.9" y="158.9">0</text>
<text x="290.3" y="158.9">0</text>
<text x="304.8" y="158.9">0</text>
<text x="319.2" y="158.9">0</text>
<text x="333.6" y="158.9">0</text>
<text x="348.0" y="158.9">0</text>
<text x="45.0" y="169.9">0</text>
<text x="59.4" y="169.9">0</text>
<text x="73.9" y="169.9">1</text>
<text x="88.3" y="169.9">0</text>
<text x="102.7" y="169.9">0</text>
<text x="117.2" y="169.9">0</text>
<text x="131.6" y="169.9">0</text>
<text x="146.0" y="169.9">0</text>
<text x="160.5" y="169.9">0</text>
<text x="174.9" y="169.9">0</text>
<text x="189.3" y="169.9">0</text>
<text x="203.7" y="169.9" fill="#262626">19</text>
<text x="218.2" y="169.9">0</text>
<text x="232.6" y="169.9">0</text>
<text x="247.0" y="169.9">0</text>
<text x="261.5" y="169.9">0</text>
<text x="275.9" y="169.9">0</text>
<text x="290.3" y="169.9">0</text>
<text x="304.8" y="169.9">0</text>
<text x="319.2" y="169.9">0</text>
<text x="333.6" y="169.9">0</text>
<text x="348.0" y="169.9">0</text>
<text x="45.0" y="181.0">0</text>
<text x="59.4" y="181.0">0</text>
<text x="73.9" y="181.0">0</text>
<text x="88.3" y="181.0">0</text>
<text x="102.7" y="181.0">0</text>
<text x="117.2" y="181.0">0</text>
<text x="131.6" y="181.0">0</text>
<text x="146.0" y="181.0">0</text>
<text x="160.5" y="181.0">0</text>
<text x="174.9" y="181.0">0</text>
<text x="189.3" y="181.0">0</text>
<text x="203.7" y="181.0">0</text>
<text x="218.2" y="181.0" fill="#262626">20</text>
<text x="232.6" y="181.0">0</text>
<text x="247.0" y="181.0">0</text>
<text x="261.5" y="181.0">0</text>
<text x="275.9" y="181.0">0</text>
<text x="290.3" y="181.0">0</text>
<text x="304.8" y="181.0">0</text>
<text x="319.2" y="181.0">0</text>
<text x="333.6" y="181.0">0</text>
<text x="348.0" y="181.0">0</text>
<text x="45.0" y="192.0">0</text>
<text x="59.4" y="192.0">0</text>
<text x="73.9" y="192.0">0</text>
<text x="88.3" y="192.0">0</text>
<text x="102.7" y="192.0">0</text>
<text x="117.2" y="192.0">0</text>
<text x="131.6" y="192.0">0</text>
<text x="146.0" y="192.0">0</text>
<text x="160.5" y="192.0">0</text>
<text x="174.9" y="192.0">0</text>
<text x="189.3" y="192.0">0</text>
<text x="203.7" y="192.0">0</text>
<text x="218.2" y="192.0">0</text>
<text x="232.6" y="192.0" fill="#262626">20</text>
<text x="247.0" y="192.0">0</text>
<text x="261.5" y="192.0">0</text>
<text x="275.9" y="192.0">0</text>
<text x="290.3" y="192.0">0</text>
<text x="304.8" y="192.0">0</text>
<text x="319.2" y="192.0">0</text>
<text x="333.6" y="192.0">0</text>
<text x="348.0" y="192.0">0</text>
<text x="45.0" y="203.0">0</text>
<text x="59.4" y="203.0">0</text>
<text x="73.9" y="203.0">0</text>
<text x="88.3" y="203.0">0</text>
<text x="102.7" y="203.0">0</text>
<text x="117.2" y="203.0">0</text>
<text x="131.6" y="203.0">0</text>
<text x="146.0" y="203.0">0</text>
<text x="160.5" y="203.0">0</text>
<text x="174.9" y="203.0">0</text>
<text x="189.3" y="203.0">0</text>
<text x="203.7" y="203.0">0</text>
<text x="218.2" y="203.0">0</text>
<text x="232.6" y="203.0">0</text>
<text x="247.0" y="203.0" fill="#262626">20</text>
<text x="261.5" y="203.0">0</text>
<text x="275.9" y="203.0">0</text>
<text x="290.3" y="203.0">0</text>
<text x="304.8" y="203.0">0</text>
<text x="319.2" y="203.0">0</text>
<text x="333.6" y="203.0">0</text>
<text x="348.0" y="203.0">0</text>
<text x="45.0" y="214.0">0</text>
<text x="59.4" y="214.0">0</text>
<text x="73.9" y="214.0">0</text>
<text x="88.3" y="214.0">0</text>
<text x="102.7" y="214.0">0</text>
<text x="117.2" y="214.0">0</text>
<text x="131.6" y="214.0">0</text>
<text x="146.0" y="214.0">0</text>
<text x="160.5" y="214.0">0</text>
<text x="174.9" y="214.0">0</text>
<text x="189.3" y="214.0">0</text>
<text x="203.7" y="214.0">0</text>
<text x="218.2" y="214.0">0</text>
<text x="232.6" y="214.0">0</text>
<text x="247.0" y="214.0">0</text>
<text x="261.5" y="214.0" fill="#262626">20</text>
<text x="275.9" y="214.0">0</text>
<text x="290.3" y="214.0">0</text>
<text x="304.8" y="214.0">0</text>
<text x="319.2" y="214.0">0</text>
<text x="333.6" y="214.0">0</text>
<text x="348.0" y="214.0">0</text>
<text x="45.0" y="225.0">0</text>
<text x="59.4" y="225.0">0</text>
<text x="73.9" y="225.0">0</text>
<text x="88.3" y="225.0">0</text>
<text x="102.7" y="225.0">0</text>
<text x="117.2" y="225.0">0</text>
<text x="131.6" y="225.0">0</text>
<text x="146.0" y="225.0">0</text>
<text x="160.5" y="225.0">0</text>
<text x="174.9" y="225.0">0</text>
<text x="189.3" y="225.0">0</text>
<text x="203.7" y="225.0">0</text>
<text x="218.2" y="225.0">0</text>
<text x="232.6" y="225.0">0</text>
<text x="247.0" y="225.0">0</text>
<text x="261.5" y="225.0">0</text>
<text x="275.9" y="225.0" fill="#262626">20</text>
<text x="290.3" y="225.0">0</text>
<text x="304.8" y="225.0">0</text>
<text x="319.2" y="225.0">0</text>
<text x="333.6" y="225.0">0</text>
<text x="348.0" y="225.0">0</text>
<text x="45.0" y="236.1">0</text>
<text x="59.4" y="236.1">0</text>
<text x="73.9" y="236.1">0</text>
<text x="88.3" y="236.1">0</text>
<text x="102.7" y="236.1">0</text>
<text x="117.2" y="236.1">0</text>
<text x="131.6" y="236.1">0</text>
<text x="146.0" y="236.1">0</text>
<text x="160.5" y="236.1">1</text>
<text x="174.9" y="236.1">0</text>
<text x="189.3" y="236.1">0</text>
<text x="203.7" y="236.1">0</text>
<text x="218.2" y="236.1">0</text>
<text x="232.6" y="236.1">0</text>
<text x="247.0" y="236.1">0</text>
<text x="261.5" y="236.1">0</text>
<text x="275.9" y="236.1">0</text>
<text x="290.3" y="236.1" fill="#262626">19</text>
<text x="304.8" y="236.1">0</text>
<text x="319.2" y="236.1">0</text>
<text x="333.6" y="236.1">0</text>
<text x="348.0" y="236.1">0</text>
<text x="45.0" y="247.1">0</text>
<text x="59.4" y="247.1">0</text>
<text x="73.9" y="247.1">0</text>
<text x="88.3" y="247.1">0</text>
<text x="102.7" y="247.1">0</text>
<text x="117.2" y="247.1">0</text>
<text x="131.6" y="247.1">0</text>
<text x="146.0" y="247.1">0</text>
<text x="160.5" y="247.1">0</text>
<text x="174.9" y="247.1">1</text>
<text x="189.3" y="247.1">0</text>
<text x="203.7" y="247.1">0</text>
<text x="218.2" y="247.1">0</text>
<text x="232.6" y="247.1">0</text>
<text x="247.0" y="247.1">0</text>
<text x="261.5" y="247.1">0</text>
<text x="275.9" y="247.1">0</text>
<text x="290.3" y="247.1">0</text>
<text x="304.8" y="247.1" fill="#262626">19</text>
<text x="319.2" y="247.1">0</text>
<text x="333.6" y="247.1">0</text>
<text x="348.0" y="247.1">0</text>
<text x="45.0" y="258.1">0</text>
<text x="59.4" y="258.1">0</text>
<text x="73.9" y="258.1">0</text>
<text x="88.3" y="258.1">0</text>
<text x="102.7" y="258.1">0</text>
<text x="117.2" y="258.1">0</text>
<text x="131.6" y="258.1">0</text>
<text x="146.0" y="258.1">0</text>
<text x="160.5" y="258.1">0</text>
<text x="174.9" y="258.1">0</text>
<text x="189.3" y="258.1">0</text>
<text x="203.7" y="258.1">0</text>
<text x="218.2" y="258.1">0</text>
<text x="232.6" y="258.1">0</text>
<text x="247.0" y="258.1">0</text>
<text x="261.5" y="258.1">0</text>
<text x="275.9" y="258.1">0</text>
<text x="290.3" y="258.1">0</text>
<text x="304.8" y="258.1">0</text>
<text x="319.2" y="258.1" fill="#262626">20</text>
<text x="333.6" y="258.1">0</text>
<text x="348.0" y="258.1">0</text>
<text x="45.0" y="269.1">0</text>
<text x="59.4" y="269.1">0</text>
<text x="73.9" y="269.1">0</text>
<text x="88.3" y="269.1">0</text>
<text x="102.7" y="269.1">0</text>
<text x="117.2" y="269.1">0</text>
<text x="131.6" y="269.1">0</text>
<text x="146.0" y="269.1">0</text>
<text x="160.5" y="269.1">4</text>
<text x="174.9" y="269.1">0</text>
<text x="189.3" y="269.1">0</text>
<text x="203.7" y="269.1">0</text>
<text x="218.2" y="269.1">0</text>
<text x="232.6" y="269.1">0</text>
<text x="247.0" y="269.1">0</text>
<text x="261.5" y="269.1">0</text>
<text x="275.9" y="269.1">0</text>
<text x="290.3" y="269.1">0</text>
<text x="304.8" y="269.1">0</text>
<text x="319.2" y="269.1">0</text>
<text x="333.6" y="269.1" fill="#262626">16</text>
<text x="348.0" y="269.1">0</text>
<text x="45.0" y="280.1">0</text>
<text x="59.4" y="280.1">0</text>
<text x="73.9" y="280.1">0</text>
<text x="88.3" y="280.1">0</text>
<text x="102.7" y="280.1">0</text>
<text x="117.2" y="280.1">0</text>
<text x="131.6" y="280.1">0</text>
<text x="146.0" y="280.1">0</text>
<text x="160.5" y="280.1">0</text>
<text x="174.9" y="280.1">0</text>
<text x="189.3" y="280.1">0</text>
<text x="203.7" y="280.1">0</text>
<text x="218.2" y="280.1">0</text>
<text x="232.6" y="280.1">0</text>
<text x="247.0" y="280.1">0</text>
<text x="261.5" y="280.1">0</text>
<text x="275.9" y="280.1">0</text>
<text x="290.3" y="280.1">0</text>
<text x="304.8" y="280.1">0</text>
<text x="319.2" y="280.1">0</text>
<text x="333.6" y="280.1">0</text>
<text x="348.0" y="280.1" fill="#262626">20</text>
</g>
<text x="196.5" y="22.0" font-family="DejaVu Sans,sans-serif" font-size="20.3" text-anchor="middle" fill="#262626">Confusion Matrix for KNN</text>
<text x="196.5" y="36.4" font-family="DejaVu Sans,sans-serif" font-size="10.2" text-anchor="middle" fill="#262626">Predicted label</text>
<text transform="translate(13.2,162.9) rotate(-90)" font-family="DejaVu Sans,sans-serif" font-size="9.6" text-anchor="middle" fill="#262626">Actual label</text>
<g font-family="DejaVu Sans,sans-serif" font-size="9.6" fill="#262626">
<text transform="translate(29.2,45.9) rotate(-90)" text-anchor="middle">0</text>
<rect x="33.8" y="44.5" width="4" height="0.8"/>
<text transform="translate(29.2,67.9) rotate(-90)" text-anchor="middle">2</text>
<rect x="33.8" y="66.5" width="4" height="0.8"/>
<text transform="translate(29.2,90.0) rotate(-90)" text-anchor="middle">4</text>
<rect x="33.8" y="88.6" width="4" height="0.8"/>
<text transform="translate(29.2,112.0) rotate(-90)" text-anchor="middle">6</text>
<rect x="33.8" y="110.6" width="4" height="0.8"/>
<text transform="translate(29.2,134.1) rotate(-90)" text-anchor="middle">8</text>
<rect x="33.8" y="132.7" width="4" height="0.8"/>
<text transform="translate(29.2,157.9) rotate(-90)" text-anchor="middle">10</text>
<rect x="33.8" y="154.7" width="4" height="0.8"/>
<text transform="translate(29.2,180.0) rotate(-90)" text-anchor="middle">12</text>
<rect x="33.8" y="176.8" width="4" height="0.8"/>
<text transform="translate(29.2,202.0) rotate(-90)" text-anchor="middle">14</text>
<rect x="33.8" y="198.8" width="4" height="0.8"/>
<text transform="translate(29.2,224.0) rotate(-90)" text-anchor="middle">16</text>
<rect x="33.8" y="220.8" width="4" height="0.8"/>
<text transform="translate(29.2,246.1) rotate(-90)" text-anchor="middle">18</text>
<rect x="33.8" y="242.9" width="4" height="0.8"/>
<text transform="translate(29.2,268.1) rotate(-90)" text-anchor="middle">20</text>
<rect x="33.8" y="264.9" width="4" height="0.8"/>
<text transform="translate(48.4,291.6) rotate(-90)" text-anchor="end">0</text>
<rect x="44.6" y="281.8" width="0.8" height="4"/>
<text transform="translate(62.8,291.6) rotate(-90)" text-anchor="end">1</text>
<rect x="59.0" y="281.8" width="0.8" height="4"/>
<text transform="translate(77.3,291.6) rotate(-90)" text-anchor="end">2</text>
<rect x="73.5" y="281.8" width="0.8" height="4"/>
<text transform="translate(91.7,291.6) rotate(-90)" text-anchor="end">3</text>
<rect x="87.9" y="281.8" width="0.8" height="4"/>
<text transform="translate(106.1,291.6) rotate(-90)" text-anchor="end">4</text>
<rect x="102.3" y="281.8" width="0.8" height="4"/>
<text transform="translate(120.6,291.6) rotate(-90)" text-anchor="end">5</text>
<rect x="116.8" y="281.8" width="0.8" height="4"/>
<text transform="translate(135.0,291.6) rotate(-90)" text-anchor="end">6</text>
<rect x="131.2" y="281.8" width="0.8" height="4"/>
<text transform="translate(149.4,291.6) rotate(-90)" text-anchor="end">7</text>
<rect x="145.6" y="281.8" width="0.8" height="4"/>
<text transform="translate(163.9,291.6) rotate(-90)" text-anchor="end">8</text>
<rect x="160.1" y="281.8" width="0.8" height="4"/>
<text transform="translate(178.3,291.6) rotate(-90)" text-anchor="end">9</text>
<rect x="174.5" y="281.8" width="0.8" height="4"/>
<text transform="translate(192.7,291.6) rotate(-90)" text-anchor="end">10</text>
<rect x="188.9" y="281.8" width="0.8" height="4"/>
<text transform="translate(207.1,291.6) rotate(-90)" text-anchor="end">11</text>
<rect x="203.3" y="281.8" width="0.8" height="4"/>
<text transform="translate(221.6,291.6) rotate(-90)" text-anchor="end">12</text>
<rect x="217.8" y="281.8" width="0.8" height="4"/>
<text transform="translate(236.0,291.6) rotate(-90)" text-anchor="end">13</text>
<rect x="232.2" y="281.8" width="0.8" height="4"/>
<text transform="translate(250.4,291.6) rotate(-90)" text-anchor="end">14</text>
<rect x="246.6" y="281.8" width="0.8" height="4"/>
<text transform="translate(264.9,291.6) rotate(-90)" text-anchor="end">15</text>
<rect x="261.1" y="281.8" width="0.8" height="4"/>
<text transform="translate(279.3,291.6) rotate(-90)" text-anchor="end">16</text>
<rect x="275.5" y="281.8" width="0.8" height="4"/>
<text transform="translate(293.7,291.6) rotate(-90)" text-anchor="end">17</text>
<rect x="289.9" y="281.8" width="0.8" height="4"/>
<text transform="translate(308.2,291.6) rotate(-90)" text-anchor="end">18</text>
<rect x="304.4" y="281.8" width="0.8" height="4"/>
<text transform="translate(322.6,291.6) rotate(-90)" text-anchor="end">19</text>
<rect x="318.8" y="281.8" width="0.8" height="4"/>
<text transform="translate(337.0,291.6) rotate(-90)" text-anchor="end">20</text>
<rect x="333.2" y="281.8" width="0.8" height="4"/>
<text transform="translate(351.4,291.6) rotate(-90)" text-anchor="end">21</text>
<rect x="347.6" y="281.8" width="0.8" height="4"/>
<rect x="387.09999999999997" y="283.0" width="3.6" height="0.8"/>
<text x="393.7" y="286.8">0.0</text>
<rect x="387.09999999999997" y="252.7" width="3.6" height="0.8"/>
<text x="393.7" y="256.5">2.5</text>
<rect x="387.09999999999997" y="222.3" width="3.6" height="0.8"/>
<text x="393.7" y="226.1">5.0</text>
<rect x="387.09999999999997" y="192.0" width="3.6" height="0.8"/>
<text x="393.7" y="195.8">7.5</text>
<rect x="387.09999999999997" y="161.6" width="3.6" height="0.8"/>
<text x="393.7" y="165.4">10.0</text>
<rect x="387.09999999999997" y="131.3" width="3.6" height="0.8"/>
<text x="393.7" y="135.1">12.5</text>
<rect x="387.09999999999997" y="101.0" width="3.6" height="0.8"/>
<text x="393.7" y="104.8">15.0</text>
<rect x="387.09999999999997" y="70.6" width="3.6" height="0.8"/>
<text x="393.7" y="74.4">17.5</text>
<rect x="387.09999999999997" y="40.3" width="3.6" height="0.8"/>
<text x="393.7" y="44.1">20.0</text>
</g>
<linearGradient id="g1" x1="0" y1="1" x2="0" y2="0"><stop offset="0" stop-color="#03051a"/><stop offset="0.143" stop-color="#35193e"/><stop offset="0.286" stop-color="#701f57"/><stop offset="0.429" stop-color="#ad1759"/><stop offset="0.571" stop-color="#e13342"/><stop offset="0.714" stop-color="#f37651"/><stop offset="0.857" stop-color="#f6b48f"/><stop offset="1.0" stop-color="#faebdd"/></linearGradient>
<rect x="374.7" y="39.4" width="12.4" height="242.4" fill="url(#g1)"/></svg>
<div class="a" style="left:1286px;top:144px;width:8px;height:358px;background:#455364"></div>
<div class="box" style="left:1295px;top:144px;width:204px;height:358px"></div>
<div class="a" style="left:1296px;top:147.6px;width:190px;height:353px;overflow:hidden">
<svg class="fig" style="left:2.3px;top:-59.5px" width="184" height="134.5" viewBox="0 0 423.5 309.5"><rect width="423.5" height="309.5" fill="#fff"/>
<rect x="37.8" y="39.4" width="317.5" height="242.4" fill="#03051a"/>
<rect x="37.8" y="39.4" width="14.6" height="11.2" fill="#faebdd"/>
<rect x="52.2" y="50.4" width="14.6" height="11.2" fill="#faebdd"/>
<rect x="66.7" y="61.4" width="14.6" height="11.2" fill="#faebdd"/>
<rect x="81.1" y="72.5" width="14.6" height="11.2" fill="#faebdd"/>
<rect x="95.5" y="83.5" width="14.6" height="11.2" fill="#faebdd"/>
<rect x="110.0" y="94.5" width="14.6" height="11.2" fill="#faebdd"/>
<rect x="124.4" y="105.5" width="14.6" height="11.2" fill="#faebdd"/>
<rect x="138.8" y="116.5" width="14.6" height="11.2" fill="#faebdd"/>
<rect x="153.2" y="127.6" width="14.6" height="11.2" fill="#faebdd"/>
<rect x="167.7" y="138.6" width="14.6" height="11.2" fill="#faebdd"/>
<rect x="182.1" y="149.6" width="14.6" height="11.2" fill="#faebdd"/>
<rect x="196.5" y="160.6" width="14.6" height="11.2" fill="#faebdd"/>
<rect x="211.0" y="171.6" width="14.6" height="11.2" fill="#faebdd"/>
<rect x="225.4" y="182.7" width="14.6" height="11.2" fill="#f6b18c"/>
<rect x="239.8" y="193.7" width="14.6" height="11.2" fill="#faebdd"/>
<rect x="254.2" y="204.7" width="14.6" height="11.2" fill="#faebdd"/>
<rect x="268.7" y="215.7" width="14.6" height="11.2" fill="#faebdd"/>
<rect x="283.1" y="226.7" width="14.6" height="11.2" fill="#faebdd"/>
<rect x="297.5" y="237.8" width="14.6" height="11.2" fill="#faebdd"/>
<rect x="312.0" y="248.8" width="14.6" height="11.2" fill="#faebdd"/>
<rect x="326.4" y="259.8" width="14.6" height="11.2" fill="#f9d8c2"/>
<rect x="340.8" y="270.8" width="14.6" height="11.2" fill="#faebdd"/>
<rect x="66.7" y="182.7" width="14.6" height="11.2" fill="#140c27"/>
<rect x="153.2" y="182.7" width="14.6" height="11.2" fill="#140c27"/>
<rect x="225.4" y="149.6" width="14.6" height="11.2" fill="#140c27"/>
<rect x="153.2" y="259.8" width="14.6" height="11.2" fill="#140c27"/>
<g font-family="DejaVu Sans,sans-serif" font-size="10.2" text-anchor="middle" fill="#9c9ca2">
<text x="45.0" y="48.7" fill="#262626">20</text>
<text x="59.4" y="48.7">0</text>
<text x="73.9" y="48.7">0</text>
<text x="88.3" y="48.7">0</text>
<text x="102.7" y="48.7">0</text>
<text x="117.2" y="48.7">0</text>
<text x="131.6" y="48.7">0</text>
<text x="146.0" y="48.7">0</text>
<text x="160.5" y="48.7">0</text>
<text x="174.9" y="48.7">0</text>
<text x="189.3" y="48.7">0</text>
<text x="203.7" y="48.7">0</text>
<text x="218.2" y="48.7">0</text>
<text x="232.6" y="48.7">0</text>
<text x="247.0" y="48.7">0</text>
<text x="261.5" y="48.7">0</text>
<text x="275.9" y="48.7">0</text>
<text x="290.3" y="48.7">0</text>
<text x="304.8" y="48.7">0</text>
<text x="319.2" y="48.7">0</text>
<text x="333.6" y="48.7">0</text>
<text x="348.0" y="48.7">0</text>
<text x="45.0" y="59.7">0</text>
<text x="59.4" y="59.7" fill="#262626">20</text>
<text x="73.9" y="59.7">0</text>
<text x="88.3" y="59.7">0</text>
<text x="102.7" y="59.7">0</text>
<text x="117.2" y="59.7">0</text>
<text x="131.6" y="59.7">0</text>
<text x="146.0" y="59.7">0</text>
<text x="160.5" y="59.7">0</text>
<text x="174.9" y="59.7">0</text>
<text x="189.3" y="59.7">0</text>
<text x="203.7" y="59.7">0</text>
<text x="218.2" y="59.7">0</text>
<text x="232.6" y="59.7">0</text>
<text x="247.0" y="59.7">0</text>
<text x="261.5" y="59.7">0</text>
<text x="275.9" y="59.7">0</text>
<text x="290.3" y="59.7">0</text>
<text x="304.8" y="59.7">0</text>
<text x="319.2" y="59.7">0</text>
<text x="333.6" y="59.7">0</text>
<text x="348.0" y="59.7">0</text>
<text x="45.0" y="70.7">0</text>
<text x="59.4" y="70.7">0</text>
<text x="73.9" y="70.7" fill="#262626">20</text>
<text x="88.3" y="70.7">0</text>
<text x="102.7" y="70.7">0</text>
<text x="117.2" y="70.7">0</text>
<text x="131.6" y="70.7">0</text>
<text x="146.0" y="70.7">0</text>
<text x="160.5" y="70.7">0</text>
<text x="174.9" y="70.7">0</text>
<text x="189.3" y="70.7">0</text>
<text x="203.7" y="70.7">0</text>
<text x="218.2" y="70.7">0</text>
<text x="232.6" y="70.7">0</text>
<text x="247.0" y="70.7">0</text>
<text x="261.5" y="70.7">0</text>
<text x="275.9" y="70.7">0</text>
<text x="290.3" y="70.7">0</text>
<text x="304.8" y="70.7">0</text>
<text x="319.2" y="70.7">0</text>
<text x="333.6" y="70.7">0</text>
<text x="348.0" y="70.7">0</text>
<text x="45.0" y="81.8">0</text>
<text x="59.4" y="81.8">0</text>
<text x="73.9" y="81.8">0</text>
<text x="88.3" y="81.8" fill="#262626">20</text>
<text x="102.7" y="81.8">0</text>
<text x="117.2" y="81.8">0</text>
<text x="131.6" y="81.8">0</text>
<text x="146.0" y="81.8">0</text>
<text x="160.5" y="81.8">0</text>
<text x="174.9" y="81.8">0</text>
<text x="189.3" y="81.8">0</text>
<text x="203.7" y="81.8">0</text>
<text x="218.2" y="81.8">0</text>
<text x="232.6" y="81.8">0</text>
<text x="247.0" y="81.8">0</text>
<text x="261.5" y="81.8">0</text>
<text x="275.9" y="81.8">0</text>
<text x="290.3" y="81.8">0</text>
<text x="304.8" y="81.8">0</text>
<text x="319.2" y="81.8">0</text>
<text x="333.6" y="81.8">0</text>
<text x="348.0" y="81.8">0</text>
<text x="45.0" y="92.8">0</text>
<text x="59.4" y="92.8">0</text>
<text x="73.9" y="92.8">0</text>
<text x="88.3" y="92.8">0</text>
<text x="102.7" y="92.8" fill="#262626">20</text>
<text x="117.2" y="92.8">0</text>
<text x="131.6" y="92.8">0</text>
<text x="146.0" y="92.8">0</text>
<text x="160.5" y="92.8">0</text>
<text x="174.9" y="92.8">0</text>
<text x="189.3" y="92.8">0</text>
<text x="203.7" y="92.8">0</text>
<text x="218.2" y="92.8">0</text>
<text x="232.6" y="92.8">0</text>
<text x="247.0" y="92.8">0</text>
<text x="261.5" y="92.8">0</text>
<text x="275.9" y="92.8">0</text>
<text x="290.3" y="92.8">0</text>
<text x="304.8" y="92.8">0</text>
<text x="319.2" y="92.8">0</text>
<text x="333.6" y="92.8">0</text>
<text x="348.0" y="92.8">0</text>
<text x="45.0" y="103.8">0</text>
<text x="59.4" y="103.8">0</text>
<text x="73.9" y="103.8">0</text>
<text x="88.3" y="103.8">0</text>
<text x="102.7" y="103.8">0</text>
<text x="117.2" y="103.8" fill="#262626">20</text>
<text x="131.6" y="103.8">0</text>
<text x="146.0" y="103.8">0</text>
<text x="160.5" y="103.8">0</text>
<text x="174.9" y="103.8">0</text>
<text x="189.3" y="103.8">0</text>
<text x="203.7" y="103.8">0</text>
<text x="218.2" y="103.8">0</text>
<text x="232.6" y="103.8">0</text>
<text x="247.0" y="103.8">0</text>
<text x="261.5" y="103.8">0</text>
<text x="275.9" y="103.8">0</text>
<text x="290.3" y="103.8">0</text>
<text x="304.8" y="103.8">0</text>
<text x="319.2" y="103.8">0</text>
<text x="333.6" y="103.8">0</text>
<text x="348.0" y="103.8">0</text>
<text x="45.0" y="114.8">0</text>
<text x="59.4" y="114.8">0</text>
<text x="73.9" y="114.8">0</text>
<text x="88.3" y="114.8">0</text>
<text x="102.7" y="114.8">0</text>
<text x="117.2" y="114.8">0</text>
<text x="131.6" y="114.8" fill="#262626">20</text>
<text x="146.0" y="114.8">0</text>
<text x="160.5" y="114.8">0</text>
<text x="174.9" y="114.8">0</text>
<text x="189.3" y="114.8">0</text>
<text x="203.7" y="114.8">0</text>
<text x="218.2" y="114.8">0</text>
<text x="232.6" y="114.8">0</text>
<text x="247.0" y="114.8">0</text>
<text x="261.5" y="114.8">0</text>
<text x="275.9" y="114.8">0</text>
<text x="290.3" y="114.8">0</text>
<text x="304.8" y="114.8">0</text>
<text x="319.2" y="114.8">0</text>
<text x="333.6" y="114.8">0</text>
<text x="348.0" y="114.8">0</text>
<text x="45.0" y="125.8">0</text>
<text x="59.4" y="125.8">0</text>
<text x="73.9" y="125.8">0</text>
<text x="88.3" y="125.8">0</text>
<text x="102.7" y="125.8">0</text>
<text x="117.2" y="125.8">0</text>
<text x="131.6" y="125.8">0</text>
<text x="146.0" y="125.8" fill="#262626">20</text>
<text x="160.5" y="125.8">0</text>
<text x="174.9" y="125.8">0</text>
<text x="189.3" y="125.8">0</text>
<text x="203.7" y="125.8">0</text>
<text x="218.2" y="125.8">0</text>
<text x="232.6" y="125.8">0</text>
<text x="247.0" y="125.8">0</text>
<text x="261.5" y="125.8">0</text>
<text x="275.9" y="125.8">0</text>
<text x="290.3" y="125.8">0</text>
<text x="304.8" y="125.8">0</text>
<text x="319.2" y="125.8">0</text>
<text x="333.6" y="125.8">0</text>
<text x="348.0" y="125.8">0</text>
<text x="45.0" y="136.9">0</text>
<text x="59.4" y="136.9">0</text>
<text x="73.9" y="136.9">0</text>
<text x="88.3" y="136.9">0</text>
<text x="102.7" y="136.9">0</text>
<text x="117.2" y="136.9">0</text>
<text x="131.6" y="136.9">0</text>
<text x="146.0" y="136.9">0</text>
<text x="160.5" y="136.9" fill="#262626">20</text>
<text x="174.9" y="136.9">0</text>
<text x="189.3" y="136.9">0</text>
<text x="203.7" y="136.9">0</text>
<text x="218.2" y="136.9">0</text>
<text x="232.6" y="136.9">0</text>
<text x="247.0" y="136.9">0</text>
<text x="261.5" y="136.9">0</text>
<text x="275.9" y="136.9">0</text>
<text x="290.3" y="136.9">0</text>
<text x="304.8" y="136.9">0</text>
<text x="319.2" y="136.9">0</text>
<text x="333.6" y="136.9">0</text>
<text x="348.0" y="136.9">0</text>
<text x="45.0" y="147.9">0</text>
<text x="59.4" y="147.9">0</text>
<text x="73.9" y="147.9">0</text>
<text x="88.3" y="147.9">0</text>
<text x="102.7" y="147.9">0</text>
<text x="117.2" y="147.9">0</text>
<text x="131.6" y="147.9">0</text>
<text x="146.0" y="147.9">0</text>
<text x="160.5" y="147.9">0</text>
<text x="174.9" y="147.9" fill="#262626">20</text>
<text x="189.3" y="147.9">0</text>
<text x="203.7" y="147.9">0</text>
<text x="218.2" y="147.9">0</text>
<text x="232.6" y="147.9">0</text>
<text x="247.0" y="147.9">0</text>
<text x="261.5" y="147.9">0</text>
<text x="275.9" y="147.9">0</text>
<text x="290.3" y="147.9">0</text>
<text x="304.8" y="147.9">0</text>
<text x="319.2" y="147.9">0</text>
<text x="333.6" y="147.9">0</text>
<text x="348.0" y="147.9">0</text>
<text x="45.0" y="158.9">0</text>
<text x="59.4" y="158.9">0</text>
<text x="73.9" y="158.9">0</text>
<text x="88.3" y="158.9">0</text>
<text x="102.7" y="158.9">0</text>
<text x="117.2" y="158.9">0</text>
<text x="131.6" y="158.9">0</text>
<text x="146.0" y="158.9">0</text>
<text x="160.5" y="158.9">0</text>
<text x="174.9" y="158.9">0</text>
<text x="189.3" y="158.9" fill="#262626">20</text>
<text x="203.7" y="158.9">0</text>
<text x="218.2" y="158.9">0</text>
<text x="232.6" y="158.9">1</text>
<text x="247.0" y="158.9">0</text>
<text x="261.5" y="158.9">0</text>
<text x="275.9" y="158.9">0</text>
<text x="290.3" y="158.9">0</text>
<text x="304.8" y="158.9">0</text>
<text x="319.2" y="158.9">0</text>
<text x="333.6" y="158.9">0</text>
<text x="348.0" y="158.9">0</text>
<text x="45.0" y="169.9">0</text>
<text x="59.4" y="169.9">0</text>
<text x="73.9" y="169.9">0</text>
<text x="88.3" y="169.9">0</text>
<text x="102.7" y="169.9">0</text>
<text x="117.2" y="169.9">0</text>
<text x="131.6" y="169.9">0</text>
<text x="146.0" y="169.9">0</text>
<text x="160.5" y="169.9">0</text>
<text x="174.9" y="169.9">0</text>
<text x="189.3" y="169.9">0</text>
<text x="203.7" y="169.9" fill="#262626">20</text>
<text x="218.2" y="169.9">0</text>
<text x="232.6" y="169.9">0</text>
<text x="247.0" y="169.9">0</text>
<text x="261.5" y="169.9">0</text>
<text x="275.9" y="169.9">0</text>
<text x="290.3" y="169.9">0</text>
<text x="304.8" y="169.9">0</text>
<text x="319.2" y="169.9">0</text>
<text x="333.6" y="169.9">0</text>
<text x="348.0" y="169.9">0</text>
<text x="45.0" y="181.0">0</text>
<text x="59.4" y="181.0">0</text>
<text x="73.9" y="181.0">0</text>
<text x="88.3" y="181.0">0</text>
<text x="102.7" y="181.0">0</text>
<text x="117.2" y="181.0">0</text>
<text x="131.6" y="181.0">0</text>
<text x="146.0" y="181.0">0</text>
<text x="160.5" y="181.0">0</text>
<text x="174.9" y="181.0">0</text>
<text x="189.3" y="181.0">0</text>
<text x="203.7" y="181.0">0</text>
<text x="218.2" y="181.0" fill="#262626">20</text>
<text x="232.6" y="181.0">0</text>
<text x="247.0" y="181.0">0</text>
<text x="261.5" y="181.0">0</text>
<text x="275.9" y="181.0">0</text>
<text x="290.3" y="181.0">0</text>
<text x="304.8" y="181.0">0</text>
<text x="319.2" y="181.0">0</text>
<text x="333.6" y="181.0">0</text>
<text x="348.0" y="181.0">0</text>
<text x="45.0" y="192.0">0</text>
<text x="59.4" y="192.0">0</text>
<text x="73.9" y="192.0">1</text>
<text x="88.3" y="192.0">0</text>
<text x="102.7" y="192.0">0</text>
<text x="117.2" y="192.0">0</text>
<text x="131.6" y="192.0">0</text>
<text x="146.0" y="192.0">0</text>
<text x="160.5" y="192.0">1</text>
<text x="174.9" y="192.0">0</text>
<text x="189.3" y="192.0">0</text>
<text x="203.7" y="192.0">0</text>
<text x="218.2" y="192.0">0</text>
<text x="232.6" y="192.0" fill="#262626">17</text>
<text x="247.0" y="192.0">0</text>
<text x="261.5" y="192.0">0</text>
<text x="275.9" y="192.0">0</text>
<text x="290.3" y="192.0">0</text>
<text x="304.8" y="192.0">0</text>
<text x="319.2" y="192.0">0</text>
<text x="333.6" y="192.0">0</text>
<text x="348.0" y="192.0">0</text>
<text x="45.0" y="203.0">0</text>
<text x="59.4" y="203.0">0</text>
<text x="73.9" y="203.0">0</text>
<text x="88.3" y="203.0">0</text>
<text x="102.7" y="203.0">0</text>
<text x="117.2" y="203.0">0</text>
<text x="131.6" y="203.0">0</text>
<text x="146.0" y="203.0">0</text>
<text x="160.5" y="203.0">0</text>
<text x="174.9" y="203.0">0</text>
<text x="189.3" y="203.0">0</text>
<text x="203.7" y="203.0">0</text>
<text x="218.2" y="203.0">0</text>
<text x="232.6" y="203.0">0</text>
<text x="247.0" y="203.0" fill="#262626">20</text>
<text x="261.5" y="203.0">0</text>
<text x="275.9" y="203.0">0</text>
<text x="290.3" y="203.0">0</text>
<text x="304.8" y="203.0">0</text>
<text x="319.2" y="203.0">0</text>
<text x="333.6" y="203.0">0</text>
<text x="348.0" y="203.0">0</text>
<text x="45.0" y="214.0">0</text>
<text x="59.4" y="214.0">0</text>
<text x="73.9" y="214.0">0</text>
<text x="88.3" y="214.0">0</text>
<text x="102.7" y="214.0">0</text>
<text x="117.2" y="214.0">0</text>
<text x="131.6" y="214.0">0</text>
<text x="146.0" y="214.0">0</text>
<text x="160.5" y="214.0">0</text>
<text x="174.9" y="214.0">0</text>
<text x="189.3" y="214.0">0</text>
<text x="203.7" y="214.0">0</text>
<text x="218.2" y="214.0">0</text>
<text x="232.6" y="214.0">0</text>
<text x="247.0" y="214.0">0</text>
<text x="261.5" y="214.0" fill="#262626">20</text>
<text x="275.9" y="214.0">0</text>
<text x="290.3" y="214.0">0</text>
<text x="304.8" y="214.0">0</text>
<text x="319.2" y="214.0">0</text>
<text x="333.6" y="214.0">0</text>
<text x="348.0" y="214.0">0</text>
<text x="45.0" y="225.0">0</text>
<text x="59.4" y="225.0">0</text>
<text x="73.9" y="225.0">0</text>
<text x="88.3" y="225.0">0</text>
<text x="102.7" y="225.0">0</text>
<text x="117.2" y="225.0">0</text>
<text x="131.6" y="225.0">0</text>
<text x="146.0" y="225.0">0</text>
<text x="160.5" y="225.0">0</text>
<text x="174.9" y="225.0">0</text>
<text x="189.3" y="225.0">0</text>
<text x="203.7" y="225.0">0</text>
<text x="218.2" y="225.0">0</text>
<text x="232.6" y="225.0">0</text>
<text x="247.0" y="225.0">0</text>
<text x="261.5" y="225.0">0</text>
<text x="275.9" y="225.0" fill="#262626">20</text>
<text x="290.3" y="225.0">0</text>
<text x="304.8" y="225.0">0</text>
<text x="319.2" y="225.0">0</text>
<text x="333.6" y="225.0">0</text>
<text x="348.0" y="225.0">0</text>
<text x="45.0" y="236.1">0</text>
<text x="59.4" y="236.1">0</text>
<text x="73.9" y="236.1">0</text>
<text x="88.3" y="236.1">0</text>
<text x="102.7" y="236.1">0</text>
<text x="117.2" y="236.1">0</text>
<text x="131.6" y="236.1">0</text>
<text x="146.0" y="236.1">0</text>
<text x="160.5" y="236.1">0</text>
<text x="174.9" y="236.1">0</text>
<text x="189.3" y="236.1">0</text>
<text x="203.7" y="236.1">0</text>
<text x="218.2" y="236.1">0</text>
<text x="232.6" y="236.1">0</text>
<text x="247.0" y="236.1">0</text>
<text x="261.5" y="236.1">0</text>
<text x="275.9" y="236.1">0</text>
<text x="290.3" y="236.1" fill="#262626">20</text>
<text x="304.8" y="236.1">0</text>
<text x="319.2" y="236.1">0</text>
<text x="333.6" y="236.1">0</text>
<text x="348.0" y="236.1">0</text>
<text x="45.0" y="247.1">0</text>
<text x="59.4" y="247.1">0</text>
<text x="73.9" y="247.1">0</text>
<text x="88.3" y="247.1">0</text>
<text x="102.7" y="247.1">0</text>
<text x="117.2" y="247.1">0</text>
<text x="131.6" y="247.1">0</text>
<text x="146.0" y="247.1">0</text>
<text x="160.5" y="247.1">0</text>
<text x="174.9" y="247.1">0</text>
<text x="189.3" y="247.1">0</text>
<text x="203.7" y="247.1">0</text>
<text x="218.2" y="247.1">0</text>
<text x="232.6" y="247.1">0</text>
<text x="247.0" y="247.1">0</text>
<text x="261.5" y="247.1">0</text>
<text x="275.9" y="247.1">0</text>
<text x="290.3" y="247.1">0</text>
<text x="304.8" y="247.1" fill="#262626">20</text>
<text x="319.2" y="247.1">0</text>
<text x="333.6" y="247.1">0</text>
<text x="348.0" y="247.1">0</text>
<text x="45.0" y="258.1">0</text>
<text x="59.4" y="258.1">0</text>
<text x="73.9" y="258.1">0</text>
<text x="88.3" y="258.1">0</text>
<text x="102.7" y="258.1">0</text>
<text x="117.2" y="258.1">0</text>
<text x="131.6" y="258.1">0</text>
<text x="146.0" y="258.1">0</text>
<text x="160.5" y="258.1">0</text>
<text x="174.9" y="258.1">0</text>
<text x="189.3" y="258.1">0</text>
<text x="203.7" y="258.1">0</text>
<text x="218.2" y="258.1">0</text>
<text x="232.6" y="258.1">0</text>
<text x="247.0" y="258.1">0</text>
<text x="261.5" y="258.1">0</text>
<text x="275.9" y="258.1">0</text>
<text x="290.3" y="258.1">0</text>
<text x="304.8" y="258.1">0</text>
<text x="319.2" y="258.1" fill="#262626">20</text>
<text x="333.6" y="258.1">0</text>
<text x="348.0" y="258.1">0</text>
<text x="45.0" y="269.1">0</text>
<text x="59.4" y="269.1">0</text>
<text x="73.9" y="269.1">0</text>
<text x="88.3" y="269.1">0</text>
<text x="102.7" y="269.1">0</text>
<text x="117.2" y="269.1">0</text>
<text x="131.6" y="269.1">0</text>
<text x="146.0" y="269.1">0</text>
<text x="160.5" y="269.1">1</text>
<text x="174.9" y="269.1">0</text>
<text x="189.3" y="269.1">0</text>
<text x="203.7" y="269.1">0</text>
<text x="218.2" y="269.1">0</text>
<text x="232.6" y="269.1">0</text>
<text x="247.0" y="269.1">0</text>
<text x="261.5" y="269.1">0</text>
<text x="275.9" y="269.1">0</text>
<text x="290.3" y="269.1">0</text>
<text x="304.8" y="269.1">0</text>
<text x="319.2" y="269.1">0</text>
<text x="333.6" y="269.1" fill="#262626">19</text>
<text x="348.0" y="269.1">0</text>
<text x="45.0" y="280.1">0</text>
<text x="59.4" y="280.1">0</text>
<text x="73.9" y="280.1">0</text>
<text x="88.3" y="280.1">0</text>
<text x="102.7" y="280.1">0</text>
<text x="117.2" y="280.1">0</text>
<text x="131.6" y="280.1">0</text>
<text x="146.0" y="280.1">0</text>
<text x="160.5" y="280.1">0</text>
<text x="174.9" y="280.1">0</text>
<text x="189.3" y="280.1">0</text>
<text x="203.7" y="280.1">0</text>
<text x="218.2" y="280.1">0</text>
<text x="232.6" y="280.1">0</text>
<text x="247.0" y="280.1">0</text>
<text x="261.5" y="280.1">0</text>
<text x="275.9" y="280.1">0</text>
<text x="290.3" y="280.1">0</text>
<text x="304.8" y="280.1">0</text>
<text x="319.2" y="280.1">0</text>
<text x="333.6" y="280.1">0</text>
<text x="348.0" y="280.1" fill="#262626">20</text>
</g>
<text x="196.5" y="22.0" font-family="DejaVu Sans,sans-serif" font-size="20.3" text-anchor="middle" fill="#262626">Confusion Matrix for RandomForest</text>
<text x="196.5" y="36.4" font-family="DejaVu Sans,sans-serif" font-size="10.2" text-anchor="middle" fill="#262626">Predicted label</text>
<text transform="translate(13.2,162.9) rotate(-90)" font-family="DejaVu Sans,sans-serif" font-size="9.6" text-anchor="middle" fill="#262626">Actual label</text>
<g font-family="DejaVu Sans,sans-serif" font-size="9.6" fill="#262626">
<text transform="translate(29.2,45.9) rotate(-90)" text-anchor="middle">0</text>
<rect x="33.8" y="44.5" width="4" height="0.8"/>
<text transform="translate(29.2,67.9) rotate(-90)" text-anchor="middle">2</text>
<rect x="33.8" y="66.5" width="4" height="0.8"/>
<text transform="translate(29.2,90.0) rotate(-90)" text-anchor="middle">4</text>
<rect x="33.8" y="88.6" width="4" height="0.8"/>
<text transform="translate(29.2,112.0) rotate(-90)" text-anchor="middle">6</text>
<rect x="33.8" y="110.6" width="4" height="0.8"/>
<text transform="translate(29.2,134.1) rotate(-90)" text-anchor="middle">8</text>
<rect x="33.8" y="132.7" width="4" height="0.8"/>
<text transform="translate(29.2,157.9) rotate(-90)" text-anchor="middle">10</text>
<rect x="33.8" y="154.7" width="4" height="0.8"/>
<text transform="translate(29.2,180.0) rotate(-90)" text-anchor="middle">12</text>
<rect x="33.8" y="176.8" width="4" height="0.8"/>
<text transform="translate(29.2,202.0) rotate(-90)" text-anchor="middle">14</text>
<rect x="33.8" y="198.8" width="4" height="0.8"/>
<text transform="translate(29.2,224.0) rotate(-90)" text-anchor="middle">16</text>
<rect x="33.8" y="220.8" width="4" height="0.8"/>
<text transform="translate(29.2,246.1) rotate(-90)" text-anchor="middle">18</text>
<rect x="33.8" y="242.9" width="4" height="0.8"/>
<text transform="translate(29.2,268.1) rotate(-90)" text-anchor="middle">20</text>
<rect x="33.8" y="264.9" width="4" height="0.8"/>
<text transform="translate(48.4,291.6) rotate(-90)" text-anchor="end">0</text>
<rect x="44.6" y="281.8" width="0.8" height="4"/>
<text transform="translate(62.8,291.6) rotate(-90)" text-anchor="end">1</text>
<rect x="59.0" y="281.8" width="0.8" height="4"/>
<text transform="translate(77.3,291.6) rotate(-90)" text-anchor="end">2</text>
<rect x="73.5" y="281.8" width="0.8" height="4"/>
<text transform="translate(91.7,291.6) rotate(-90)" text-anchor="end">3</text>
<rect x="87.9" y="281.8" width="0.8" height="4"/>
<text transform="translate(106.1,291.6) rotate(-90)" text-anchor="end">4</text>
<rect x="102.3" y="281.8" width="0.8" height="4"/>
<text transform="translate(120.6,291.6) rotate(-90)" text-anchor="end">5</text>
<rect x="116.8" y="281.8" width="0.8" height="4"/>
<text transform="translate(135.0,291.6) rotate(-90)" text-anchor="end">6</text>
<rect x="131.2" y="281.8" width="0.8" height="4"/>
<text transform="translate(149.4,291.6) rotate(-90)" text-anchor="end">7</text>
<rect x="145.6" y="281.8" width="0.8" height="4"/>
<text transform="translate(163.9,291.6) rotate(-90)" text-anchor="end">8</text>
<rect x="160.1" y="281.8" width="0.8" height="4"/>
<text transform="translate(178.3,291.6) rotate(-90)" text-anchor="end">9</text>
<rect x="174.5" y="281.8" width="0.8" height="4"/>
<text transform="translate(192.7,291.6) rotate(-90)" text-anchor="end">10</text>
<rect x="188.9" y="281.8" width="0.8" height="4"/>
<text transform="translate(207.1,291.6) rotate(-90)" text-anchor="end">11</text>
<rect x="203.3" y="281.8" width="0.8" height="4"/>
<text transform="translate(221.6,291.6) rotate(-90)" text-anchor="end">12</text>
<rect x="217.8" y="281.8" width="0.8" height="4"/>
<text transform="translate(236.0,291.6) rotate(-90)" text-anchor="end">13</text>
<rect x="232.2" y="281.8" width="0.8" height="4"/>
<text transform="translate(250.4,291.6) rotate(-90)" text-anchor="end">14</text>
<rect x="246.6" y="281.8" width="0.8" height="4"/>
<text transform="translate(264.9,291.6) rotate(-90)" text-anchor="end">15</text>
<rect x="261.1" y="281.8" width="0.8" height="4"/>
<text transform="translate(279.3,291.6) rotate(-90)" text-anchor="end">16</text>
<rect x="275.5" y="281.8" width="0.8" height="4"/>
<text transform="translate(293.7,291.6) rotate(-90)" text-anchor="end">17</text>
<rect x="289.9" y="281.8" width="0.8" height="4"/>
<text transform="translate(308.2,291.6) rotate(-90)" text-anchor="end">18</text>
<rect x="304.4" y="281.8" width="0.8" height="4"/>
<text transform="translate(322.6,291.6) rotate(-90)" text-anchor="end">19</text>
<rect x="318.8" y="281.8" width="0.8" height="4"/>
<text transform="translate(337.0,291.6) rotate(-90)" text-anchor="end">20</text>
<rect x="333.2" y="281.8" width="0.8" height="4"/>
<text transform="translate(351.4,291.6) rotate(-90)" text-anchor="end">21</text>
<rect x="347.6" y="281.8" width="0.8" height="4"/>
<rect x="387.09999999999997" y="283.0" width="3.6" height="0.8"/>
<text x="393.7" y="286.8">0.0</text>
<rect x="387.09999999999997" y="252.7" width="3.6" height="0.8"/>
<text x="393.7" y="256.5">2.5</text>
<rect x="387.09999999999997" y="222.3" width="3.6" height="0.8"/>
<text x="393.7" y="226.1">5.0</text>
<rect x="387.09999999999997" y="192.0" width="3.6" height="0.8"/>
<text x="393.7" y="195.8">7.5</text>
<rect x="387.09999999999997" y="161.6" width="3.6" height="0.8"/>
<text x="393.7" y="165.4">10.0</text>
<rect x="387.09999999999997" y="131.3" width="3.6" height="0.8"/>
<text x="393.7" y="135.1">12.5</text>
<rect x="387.09999999999997" y="101.0" width="3.6" height="0.8"/>
<text x="393.7" y="104.8">15.0</text>
<rect x="387.09999999999997" y="70.6" width="3.6" height="0.8"/>
<text x="393.7" y="74.4">17.5</text>
<rect x="387.09999999999997" y="40.3" width="3.6" height="0.8"/>
<text x="393.7" y="44.1">20.0</text>
</g>
<linearGradient id="g2" x1="0" y1="1" x2="0" y2="0"><stop offset="0" stop-color="#03051a"/><stop offset="0.143" stop-color="#35193e"/><stop offset="0.286" stop-color="#701f57"/><stop offset="0.429" stop-color="#ad1759"/><stop offset="0.571" stop-color="#e13342"/><stop offset="0.714" stop-color="#f37651"/><stop offset="0.857" stop-color="#f6b48f"/><stop offset="1.0" stop-color="#faebdd"/></linearGradient>
<rect x="374.7" y="39.4" width="12.4" height="242.4" fill="url(#g2)"/></svg>
<svg class="fig" style="left:2.3px;top:78.7px" width="184" height="134.5" viewBox="0 0 423.5 309.5"><rect width="423.5" height="309.5" fill="#fff"/>
<rect x="37.8" y="39.4" width="317.5" height="242.4" fill="#03051a"/>
<rect x="37.8" y="39.4" width="14.6" height="11.2" fill="#faebdd"/>
<rect x="52.2" y="50.4" width="14.6" height="11.2" fill="#faebdd"/>
<rect x="66.7" y="61.4" width="14.6" height="11.2" fill="#faebdd"/>
<rect x="81.1" y="72.5" width="14.6" height="11.2" fill="#faebdd"/>
<rect x="95.5" y="83.5" width="14.6" height="11.2" fill="#faebdd"/>
<rect x="110.0" y="94.5" width="14.6" height="11.2" fill="#faebdd"/>
<rect x="124.4" y="105.5" width="14.6" height="11.2" fill="#faebdd"/>
<rect x="138.8" y="116.5" width="14.6" height="11.2" fill="#faebdd"/>
<rect x="153.2" y="127.6" width="14.6" height="11.2" fill="#faebdd"/>
<rect x="167.7" y="138.6" width="14.6" height="11.2" fill="#faebdd"/>
<rect x="182.1" y="149.6" width="14.6" height="11.2" fill="#faebdd"/>
<rect x="196.5" y="160.6" width="14.6" height="11.2" fill="#faebdd"/>
<rect x="211.0" y="171.6" width="14.6" height="11.2" fill="#faebdd"/>
<rect x="225.4" y="182.7" width="14.6" height="11.2" fill="#faebdd"/>
<rect x="239.8" y="193.7" width="14.6" height="11.2" fill="#faebdd"/>
<rect x="254.2" y="204.7" width="14.6" height="11.2" fill="#faebdd"/>
<rect x="268.7" y="215.7" width="14.6" height="11.2" fill="#faebdd"/>
<rect x="283.1" y="226.7" width="14.6" height="11.2" fill="#faebdd"/>
<rect x="297.5" y="237.8" width="14.6" height="11.2" fill="#faebdd"/>
<rect x="312.0" y="248.8" width="14.6" height="11.2" fill="#faebdd"/>
<rect x="326.4" y="259.8" width="14.6" height="11.2" fill="#f9d8c2"/>
<rect x="340.8" y="270.8" width="14.6" height="11.2" fill="#faebdd"/>
<rect x="153.2" y="259.8" width="14.6" height="11.2" fill="#140c27"/>
<g font-family="DejaVu Sans,sans-serif" font-size="10.2" text-anchor="middle" fill="#9c9ca2">
<text x="45.0" y="48.7" fill="#262626">20</text>
<text x="59.4" y="48.7">0</text>
<text x="73.9" y="48.7">0</text>
<text x="88.3" y="48.7">0</text>
<text x="102.7" y="48.7">0</text>
<text x="117.2" y="48.7">0</text>
<text x="131.6" y="48.7">0</text>
<text x="146.0" y="48.7">0</text>
<text x="160.5" y="48.7">0</text>
<text x="174.9" y="48.7">0</text>
<text x="189.3" y="48.7">0</text>
<text x="203.7" y="48.7">0</text>
<text x="218.2" y="48.7">0</text>
<text x="232.6" y="48.7">0</text>
<text x="247.0" y="48.7">0</text>
<text x="261.5" y="48.7">0</text>
<text x="275.9" y="48.7">0</text>
<text x="290.3" y="48.7">0</text>
<text x="304.8" y="48.7">0</text>
<text x="319.2" y="48.7">0</text>
<text x="333.6" y="48.7">0</text>
<text x="348.0" y="48.7">0</text>
<text x="45.0" y="59.7">0</text>
<text x="59.4" y="59.7" fill="#262626">20</text>
<text x="73.9" y="59.7">0</text>
<text x="88.3" y="59.7">0</text>
<text x="102.7" y="59.7">0</text>
<text x="117.2" y="59.7">0</text>
<text x="131.6" y="59.7">0</text>
<text x="146.0" y="59.7">0</text>
<text x="160.5" y="59.7">0</text>
<text x="174.9" y="59.7">0</text>
<text x="189.3" y="59.7">0</text>
<text x="203.7" y="59.7">0</text>
<text x="218.2" y="59.7">0</text>
<text x="232.6" y="59.7">0</text>
<text x="247.0" y="59.7">0</text>
<text x="261.5" y="59.7">0</text>
<text x="275.9" y="59.7">0</text>
<text x="290.3" y="59.7">0</text>
<text x="304.8" y="59.7">0</text>
<text x="319.2" y="59.7">0</text>
<text x="333.6" y="59.7">0</text>
<text x="348.0" y="59.7">0</text>
<text x="45.0" y="70.7">0</text>
<text x="59.4" y="70.7">0</text>
<text x="73.9" y="70.7" fill="#262626">20</text>
<text x="88.3" y="70.7">0</text>
<text x="102.7" y="70.7">0</text>
<text x="117.2" y="70.7">0</text>
<text x="131.6" y="70.7">0</text>
<text x="146.0" y="70.7">0</text>
<text x="160.5" y="70.7">0</text>
<text x="174.9" y="70.7">0</text>
<text x="189.3" y="70.7">0</text>
<text x="203.7" y="70.7">0</text>
<text x="218.2" y="70.7">0</text>
<text x="232.6" y="70.7">0</text>
<text x="247.0" y="70.7">0</text>
<text x="261.5" y="70.7">0</text>
<text x="275.9" y="70.7">0</text>
<text x="290.3" y="70.7">0</text>
<text x="304.8" y="70.7">0</text>
<text x="319.2" y="70.7">0</text>
<text x="333.6" y="70.7">0</text>
<text x="348.0" y="70.7">0</text>
<text x="45.0" y="81.8">0</text>
<text x="59.4" y="81.8">0</text>
<text x="73.9" y="81.8">0</text>
<text x="88.3" y="81.8" fill="#262626">20</text>
<text x="102.7" y="81.8">0</text>
<text x="117.2" y="81.8">0</text>
<text x="131.6" y="81.8">0</text>
<text x="146.0" y="81.8">0</text>
<text x="160.5" y="81.8">0</text>
<text x="174.9" y="81.8">0</text>
<text x="189.3" y="81.8">0</text>
<text x="203.7" y="81.8">0</text>
<text x="218.2" y="81.8">0</text>
<text x="232.6" y="81.8">0</text>
<text x="247.0" y="81.8">0</text>
<text x="261.5" y="81.8">0</text>
<text x="275.9" y="81.8">0</text>
<text x="290.3" y="81.8">0</text>
<text x="304.8" y="81.8">0</text>
<text x="319.2" y="81.8">0</text>
<text x="333.6" y="81.8">0</text>
<text x="348.0" y="81.8">0</text>
<text x="45.0" y="92.8">0</text>
<text x="59.4" y="92.8">0</text>
<text x="73.9" y="92.8">0</text>
<text x="88.3" y="92.8">0</text>
<text x="102.7" y="92.8" fill="#262626">20</text>
<text x="117.2" y="92.8">0</text>
<text x="131.6" y="92.8">0</text>
<text x="146.0" y="92.8">0</text>
<text x="160.5" y="92.8">0</text>
<text x="174.9" y="92.8">0</text>
<text x="189.3" y="92.8">0</text>
<text x="203.7" y="92.8">0</text>
<text x="218.2" y="92.8">0</text>
<text x="232.6" y="92.8">0</text>
<text x="247.0" y="92.8">0</text>
<text x="261.5" y="92.8">0</text>
<text x="275.9" y="92.8">0</text>
<text x="290.3" y="92.8">0</text>
<text x="304.8" y="92.8">0</text>
<text x="319.2" y="92.8">0</text>
<text x="333.6" y="92.8">0</text>
<text x="348.0" y="92.8">0</text>
<text x="45.0" y="103.8">0</text>
<text x="59.4" y="103.8">0</text>
<text x="73.9" y="103.8">0</text>
<text x="88.3" y="103.8">0</text>
<text x="102.7" y="103.8">0</text>
<text x="117.2" y="103.8" fill="#262626">20</text>
<text x="131.6" y="103.8">0</text>
<text x="146.0" y="103.8">0</text>
<text x="160.5" y="103.8">0</text>
<text x="174.9" y="103.8">0</text>
<text x="189.3" y="103.8">0</text>
<text x="203.7" y="103.8">0</text>
<text x="218.2" y="103.8">0</text>
<text x="232.6" y="103.8">0</text>
<text x="247.0" y="103.8">0</text>
<text x="261.5" y="103.8">0</text>
<text x="275.9" y="103.8">0</text>
<text x="290.3" y="103.8">0</text>
<text x="304.8" y="103.8">0</text>
<text x="319.2" y="103.8">0</text>
<text x="333.6" y="103.8">0</text>
<text x="348.0" y="103.8">0</text>
<text x="45.0" y="114.8">0</text>
<text x="59.4" y="114.8">0</text>
<text x="73.9" y="114.8">0</text>
<text x="88.3" y="114.8">0</text>
<text x="102.7" y="114.8">0</text>
<text x="117.2" y="114.8">0</text>
<text x="131.6" y="114.8" fill="#262626">20</text>
<text x="146.0" y="114.8">0</text>
<text x="160.5" y="114.8">0</text>
<text x="174.9" y="114.8">0</text>
<text x="189.3" y="114.8">0</text>
<text x="203.7" y="114.8">0</text>
<text x="218.2" y="114.8">0</text>
<text x="232.6" y="114.8">0</text>
<text x="247.0" y="114.8">0</text>
<text x="261.5" y="114.8">0</text>
<text x="275.9" y="114.8">0</text>
<text x="290.3" y="114.8">0</text>
<text x="304.8" y="114.8">0</text>
<text x="319.2" y="114.8">0</text>
<text x="333.6" y="114.8">0</text>
<text x="348.0" y="114.8">0</text>
<text x="45.0" y="125.8">0</text>
<text x="59.4" y="125.8">0</text>
<text x="73.9" y="125.8">0</text>
<text x="88.3" y="125.8">0</text>
<text x="102.7" y="125.8">0</text>
<text x="117.2" y="125.8">0</text>
<text x="131.6" y="125.8">0</text>
<text x="146.0" y="125.8" fill="#262626">20</text>
<text x="160.5" y="125.8">0</text>
<text x="174.9" y="125.8">0</text>
<text x="189.3" y="125.8">0</text>
<text x="203.7" y="125.8">0</text>
<text x="218.2" y="125.8">0</text>
<text x="232.6" y="125.8">0</text>
<text x="247.0" y="125.8">0</text>
<text x="261.5" y="125.8">0</text>
<text x="275.9" y="125.8">0</text>
<text x="290.3" y="125.8">0</text>
<text x="304.8" y="125.8">0</text>
<text x="319.2" y="125.8">0</text>
<text x="333.6" y="125.8">0</text>
<text x="348.0" y="125.8">0</text>
<text x="45.0" y="136.9">0</text>
<text x="59.4" y="136.9">0</text>
<text x="73.9" y="136.9">0</text>
<text x="88.3" y="136.9">0</text>
<text x="102.7" y="136.9">0</text>
<text x="117.2" y="136.9">0</text>
<text x="131.6" y="136.9">0</text>
<text x="146.0" y="136.9">0</text>
<text x="160.5" y="136.9" fill="#262626">20</text>
<text x="174.9" y="136.9">0</text>
<text x="189.3" y="136.9">0</text>
<text x="203.7" y="136.9">0</text>
<text x="218.2" y="136.9">0</text>
<text x="232.6" y="136.9">0</text>
<text x="247.0" y="136.9">0</text>
<text x="261.5" y="136.9">0</text>
<text x="275.9" y="136.9">0</text>
<text x="290.3" y="136.9">0</text>
<text x="304.8" y="136.9">0</text>
<text x="319.2" y="136.9">0</text>
<text x="333.6" y="136.9">0</text>
<text x="348.0" y="136.9">0</text>
<text x="45.0" y="147.9">0</text>
<text x="59.4" y="147.9">0</text>
<text x="73.9" y="147.9">0</text>
<text x="88.3" y="147.9">0</text>
<text x="102.7" y="147.9">0</text>
<text x="117.2" y="147.9">0</text>
<text x="131.6" y="147.9">0</text>
<text x="146.0" y="147.9">0</text>
<text x="160.5" y="147.9">0</text>
<text x="174.9" y="147.9" fill="#262626">20</text>
<text x="189.3" y="147.9">0</text>
<text x="203.7" y="147.9">0</text>
<text x="218.2" y="147.9">0</text>
<text x="232.6" y="147.9">0</text>
<text x="247.0" y="147.9">0</text>
<text x="261.5" y="147.9">0</text>
<text x="275.9" y="147.9">0</text>
<text x="290.3" y="147.9">0</text>
<text x="304.8" y="147.9">0</text>
<text x="319.2" y="147.9">0</text>
<text x="333.6" y="147.9">0</text>
<text x="348.0" y="147.9">0</text>
<text x="45.0" y="158.9">0</text>
<text x="59.4" y="158.9">0</text>
<text x="73.9" y="158.9">0</text>
<text x="88.3" y="158.9">0</text>
<text x="102.7" y="158.9">0</text>
<text x="117.2" y="158.9">0</text>
<text x="131.6" y="158.9">0</text>
<text x="146.0" y="158.9">0</text>
<text x="160.5" y="158.9">0</text>
<text x="174.9" y="158.9">0</text>
<text x="189.3" y="158.9" fill="#262626">20</text>
<text x="203.7" y="158.9">0</text>
<text x="218.2" y="158.9">0</text>
<text x="232.6" y="158.9">0</text>
<text x="247.0" y="158.9">0</text>
<text x="261.5" y="158.9">0</text>
<text x="275.9" y="158.9">0</text>
<text x="290.3" y="158.9">0</text>
<text x="304.8" y="158.9">0</text>
<text x="319.2" y="158.9">0</text>
<text x="333.6" y="158.9">0</text>
<text x="348.0" y="158.9">0</text>
<text x="45.0" y="169.9">0</text>
<text x="59.4" y="169.9">0</text>
<text x="73.9" y="169.9">0</text>
<text x="88.3" y="169.9">0</text>
<text x="102.7" y="169.9">0</text>
<text x="117.2" y="169.9">0</text>
<text x="131.6" y="169.9">0</text>
<text x="146.0" y="169.9">0</text>
<text x="160.5" y="169.9">0</text>
<text x="174.9" y="169.9">0</text>
<text x="189.3" y="169.9">0</text>
<text x="203.7" y="169.9" fill="#262626">20</text>
<text x="218.2" y="169.9">0</text>
<text x="232.6" y="169.9">0</text>
<text x="247.0" y="169.9">0</text>
<text x="261.5" y="169.9">0</text>
<text x="275.9" y="169.9">0</text>
<text x="290.3" y="169.9">0</text>
<text x="304.8" y="169.9">0</text>
<text x="319.2" y="169.9">0</text>
<text x="333.6" y="169.9">0</text>
<text x="348.0" y="169.9">0</text>
<text x="45.0" y="181.0">0</text>
<text x="59.4" y="181.0">0</text>
<text x="73.9" y="181.0">0</text>
<text x="88.3" y="181.0">0</text>
<text x="102.7" y="181.0">0</text>
<text x="117.2" y="181.0">0</text>
<text x="131.6" y="181.0">0</text>
<text x="146.0" y="181.0">0</text>
<text x="160.5" y="181.0">0</text>
<text x="174.9" y="181.0">0</text>
<text x="189.3" y="181.0">0</text>
<text x="203.7" y="181.0">0</text>
<text x="218.2" y="181.0" fill="#262626">20</text>
<text x="232.6" y="181.0">0</text>
<text x="247.0" y="181.0">0</text>
<text x="261.5" y="181.0">0</text>
<text x="275.9" y="181.0">0</text>
<text x="290.3" y="181.0">0</text>
<text x="304.8" y="181.0">0</text>
<text x="319.2" y="181.0">0</text>
<text x="333.6" y="181.0">0</text>
<text x="348.0" y="181.0">0</text>
<text x="45.0" y="192.0">0</text>
<text x="59.4" y="192.0">0</text>
<text x="73.9" y="192.0">0</text>
<text x="88.3" y="192.0">0</text>
<text x="102.7" y="192.0">0</text>
<text x="117.2" y="192.0">0</text>
<text x="131.6" y="192.0">0</text>
<text x="146.0" y="192.0">0</text>
<text x="160.5" y="192.0">0</text>
<text x="174.9" y="192.0">0</text>
<text x="189.3" y="192.0">0</text>
<text x="203.7" y="192.0">0</text>
<text x="218.2" y="192.0">0</text>
<text x="232.6" y="192.0" fill="#262626">20</text>
<text x="247.0" y="192.0">0</text>
<text x="261.5" y="192.0">0</text>
<text x="275.9" y="192.0">0</text>
<text x="290.3" y="192.0">0</text>
<text x="304.8" y="192.0">0</text>
<text x="319.2" y="192.0">0</text>
<text x="333.6" y="192.0">0</text>
<text x="348.0" y="192.0">0</text>
<text x="45.0" y="203.0">0</text>
<text x="59.4" y="203.0">0</text>
<text x="73.9" y="203.0">0</text>
<text x="88.3" y="203.0">0</text>
<text x="102.7" y="203.0">0</text>
<text x="117.2" y="203.0">0</text>
<text x="131.6" y="203.0">0</text>
<text x="146.0" y="203.0">0</text>
<text x="160.5" y="203.0">0</text>
<text x="174.9" y="203.0">0</text>
<text x="189.3" y="203.0">0</text>
<text x="203.7" y="203.0">0</text>
<text x="218.2" y="203.0">0</text>
<text x="232.6" y="203.0">0</text>
<text x="247.0" y="203.0" fill="#262626">20</text>
<text x="261.5" y="203.0">0</text>
<text x="275.9" y="203.0">0</text>
<text x="290.3" y="203.0">0</text>
<text x="304.8" y="203.0">0</text>
<text x="319.2" y="203.0">0</text>
<text x="333.6" y="203.0">0</text>
<text x="348.0" y="203.0">0</text>
<text x="45.0" y="214.0">0</text>
<text x="59.4" y="214.0">0</text>
<text x="73.9" y="214.0">0</text>
<text x="88.3" y="214.0">0</text>
<text x="102.7" y="214.0">0</text>
<text x="117.2" y="214.0">0</text>
<text x="131.6" y="214.0">0</text>
<text x="146.0" y="214.0">0</text>
<text x="160.5" y="214.0">0</text>
<text x="174.9" y="214.0">0</text>
<text x="189.3" y="214.0">0</text>
<text x="203.7" y="214.0">0</text>
<text x="218.2" y="214.0">0</text>
<text x="232.6" y="214.0">0</text>
<text x="247.0" y="214.0">0</text>
<text x="261.5" y="214.0" fill="#262626">20</text>
<text x="275.9" y="214.0">0</text>
<text x="290.3" y="214.0">0</text>
<text x="304.8" y="214.0">0</text>
<text x="319.2" y="214.0">0</text>
<text x="333.6" y="214.0">0</text>
<text x="348.0" y="214.0">0</text>
<text x="45.0" y="225.0">0</text>
<text x="59.4" y="225.0">0</text>
<text x="73.9" y="225.0">0</text>
<text x="88.3" y="225.0">0</text>
<text x="102.7" y="225.0">0</text>
<text x="117.2" y="225.0">0</text>
<text x="131.6" y="225.0">0</text>
<text x="146.0" y="225.0">0</text>
<text x="160.5" y="225.0">0</text>
<text x="174.9" y="225.0">0</text>
<text x="189.3" y="225.0">0</text>
<text x="203.7" y="225.0">0</text>
<text x="218.2" y="225.0">0</text>
<text x="232.6" y="225.0">0</text>
<text x="247.0" y="225.0">0</text>
<text x="261.5" y="225.0">0</text>
<text x="275.9" y="225.0" fill="#262626">20</text>
<text x="290.3" y="225.0">0</text>
<text x="304.8" y="225.0">0</text>
<text x="319.2" y="225.0">0</text>
<text x="333.6" y="225.0">0</text>
<text x="348.0" y="225.0">0</text>
<text x="45.0" y="236.1">0</text>
<text x="59.4" y="236.1">0</text>
<text x="73.9" y="236.1">0</text>
<text x="88.3" y="236.1">0</text>
<text x="102.7" y="236.1">0</text>
<text x="117.2" y="236.1">0</text>
<text x="131.6" y="236.1">0</text>
<text x="146.0" y="236.1">0</text>
<text x="160.5" y="236.1">0</text>
<text x="174.9" y="236.1">0</text>
<text x="189.3" y="236.1">0</text>
<text x="203.7" y="236.1">0</text>
<text x="218.2" y="236.1">0</text>
<text x="232.6" y="236.1">0</text>
<text x="247.0" y="236.1">0</text>
<text x="261.5" y="236.1">0</text>
<text x="275.9" y="236.1">0</text>
<text x="290.3" y="236.1" fill="#262626">20</text>
<text x="304.8" y="236.1">0</text>
<text x="319.2" y="236.1">0</text>
<text x="333.6" y="236.1">0</text>
<text x="348.0" y="236.1">0</text>
<text x="45.0" y="247.1">0</text>
<text x="59.4" y="247.1">0</text>
<text x="73.9" y="247.1">0</text>
<text x="88.3" y="247.1">0</text>
<text x="102.7" y="247.1">0</text>
<text x="117.2" y="247.1">0</text>
<text x="131.6" y="247.1">0</text>
<text x="146.0" y="247.1">0</text>
<text x="160.5" y="247.1">0</text>
<text x="174.9" y="247.1">0</text>
<text x="189.3" y="247.1">0</text>
<text x="203.7" y="247.1">0</text>
<text x="218.2" y="247.1">0</text>
<text x="232.6" y="247.1">0</text>
<text x="247.0" y="247.1">0</text>
<text x="261.5" y="247.1">0</text>
<text x="275.9" y="247.1">0</text>
<text x="290.3" y="247.1">0</text>
<text x="304.8" y="247.1" fill="#262626">20</text>
<text x="319.2" y="247.1">0</text>
<text x="333.6" y="247.1">0</text>
<text x="348.0" y="247.1">0</text>
<text x="45.0" y="258.1">0</text>
<text x="59.4" y="258.1">0</text>
<text x="73.9" y="258.1">0</text>
<text x="88.3" y="258.1">0</text>
<text x="102.7" y="258.1">0</text>
<text x="117.2" y="258.1">0</text>
<text x="131.6" y="258.1">0</text>
<text x="146.0" y="258.1">0</text>
<text x="160.5" y="258.1">0</text>
<text x="174.9" y="258.1">0</text>
<text x="189.3" y="258.1">0</text>
<text x="203.7" y="258.1">0</text>
<text x="218.2" y="258.1">0</text>
<text x="232.6" y="258.1">0</text>
<text x="247.0" y="258.1">0</text>
<text x="261.5" y="258.1">0</text>
<text x="275.9" y="258.1">0</text>
<text x="290.3" y="258.1">0</text>
<text x="304.8" y="258.1">0</text>
<text x="319.2" y="258.1" fill="#262626">20</text>
<text x="333.6" y="258.1">0</text>
<text x="348.0" y="258.1">0</text>
<text x="45.0" y="269.1">0</text>
<text x="59.4" y="269.1">0</text>
<text x="73.9" y="269.1">0</text>
<text x="88.3" y="269.1">0</text>
<text x="102.7" y="269.1">0</text>
<text x="117.2" y="269.1">0</text>
<text x="131.6" y="269.1">0</text>
<text x="146.0" y="269.1">0</text>
<text x="160.5" y="269.1">1</text>
<text x="174.9" y="269.1">0</text>
<text x="189.3" y="269.1">0</text>
<text x="203.7" y="269.1">0</text>
<text x="218.2" y="269.1">0</text>
<text x="232.6" y="269.1">0</text>
<text x="247.0" y="269.1">0</text>
<text x="261.5" y="269.1">0</text>
<text x="275.9" y="269.1">0</text>
<text x="290.3" y="269.1">0</text>
<text x="304.8" y="269.1">0</text>
<text x="319.2" y="269.1">0</text>
<text x="333.6" y="269.1" fill="#262626">19</text>
<text x="348.0" y="269.1">0</text>
<text x="45.0" y="280.1">0</text>
<text x="59.4" y="280.1">0</text>
<text x="73.9" y="280.1">0</text>
<text x="88.3" y="280.1">0</text>
<text x="102.7" y="280.1">0</text>
<text x="117.2" y="280.1">0</text>
<text x="131.6" y="280.1">0</text>
<text x="146.0" y="280.1">0</text>
<text x="160.5" y="280.1">0</text>
<text x="174.9" y="280.1">0</text>
<text x="189.3" y="280.1">0</text>
<text x="203.7" y="280.1">0</text>
<text x="218.2" y="280.1">0</text>
<text x="232.6" y="280.1">0</text>
<text x="247.0" y="280.1">0</text>
<text x="261.5" y="280.1">0</text>
<text x="275.9" y="280.1">0</text>
<text x="290.3" y="280.1">0</text>
<text x="304.8" y="280.1">0</text>
<text x="319.2" y="280.1">0</text>
<text x="333.6" y="280.1">0</text>
<text x="348.0" y="280.1" fill="#262626">20</text>
</g>
<text x="196.5" y="22.0" font-family="DejaVu Sans,sans-serif" font-size="20.3" text-anchor="middle" fill="#262626">Confusion Matrix for NAVIES_BAYES</text>
<text x="196.5" y="36.4" font-family="DejaVu Sans,sans-serif" font-size="10.2" text-anchor="middle" fill="#262626">Predicted label</text>
<text transform="translate(13.2,162.9) rotate(-90)" font-family="DejaVu Sans,sans-serif" font-size="9.6" text-anchor="middle" fill="#262626">Actual label</text>
<g font-family="DejaVu Sans,sans-serif" font-size="9.6" fill="#262626">
<text transform="translate(29.2,45.9) rotate(-90)" text-anchor="middle">0</text>
<rect x="33.8" y="44.5" width="4" height="0.8"/>
<text transform="translate(29.2,67.9) rotate(-90)" text-anchor="middle">2</text>
<rect x="33.8" y="66.5" width="4" height="0.8"/>
<text transform="translate(29.2,90.0) rotate(-90)" text-anchor="middle">4</text>
<rect x="33.8" y="88.6" width="4" height="0.8"/>
<text transform="translate(29.2,112.0) rotate(-90)" text-anchor="middle">6</text>
<rect x="33.8" y="110.6" width="4" height="0.8"/>
<text transform="translate(29.2,134.1) rotate(-90)" text-anchor="middle">8</text>
<rect x="33.8" y="132.7" width="4" height="0.8"/>
<text transform="translate(29.2,157.9) rotate(-90)" text-anchor="middle">10</text>
<rect x="33.8" y="154.7" width="4" height="0.8"/>
<text transform="translate(29.2,180.0) rotate(-90)" text-anchor="middle">12</text>
<rect x="33.8" y="176.8" width="4" height="0.8"/>
<text transform="translate(29.2,202.0) rotate(-90)" text-anchor="middle">14</text>
<rect x="33.8" y="198.8" width="4" height="0.8"/>
<text transform="translate(29.2,224.0) rotate(-90)" text-anchor="middle">16</text>
<rect x="33.8" y="220.8" width="4" height="0.8"/>
<text transform="translate(29.2,246.1) rotate(-90)" text-anchor="middle">18</text>
<rect x="33.8" y="242.9" width="4" height="0.8"/>
<text transform="translate(29.2,268.1) rotate(-90)" text-anchor="middle">20</text>
<rect x="33.8" y="264.9" width="4" height="0.8"/>
<text transform="translate(48.4,291.6) rotate(-90)" text-anchor="end">0</text>
<rect x="44.6" y="281.8" width="0.8" height="4"/>
<text transform="translate(62.8,291.6) rotate(-90)" text-anchor="end">1</text>
<rect x="59.0" y="281.8" width="0.8" height="4"/>
<text transform="translate(77.3,291.6) rotate(-90)" text-anchor="end">2</text>
<rect x="73.5" y="281.8" width="0.8" height="4"/>
<text transform="translate(91.7,291.6) rotate(-90)" text-anchor="end">3</text>
<rect x="87.9" y="281.8" width="0.8" height="4"/>
<text transform="translate(106.1,291.6) rotate(-90)" text-anchor="end">4</text>
<rect x="102.3" y="281.8" width="0.8" height="4"/>
<text transform="translate(120.6,291.6) rotate(-90)" text-anchor="end">5</text>
<rect x="116.8" y="281.8" width="0.8" height="4"/>
<text transform="translate(135.0,291.6) rotate(-90)" text-anchor="end">6</text>
<rect x="131.2" y="281.8" width="0.8" height="4"/>
<text transform="translate(149.4,291.6) rotate(-90)" text-anchor="end">7</text>
<rect x="145.6" y="281.8" width="0.8" height="4"/>
<text transform="translate(163.9,291.6) rotate(-90)" text-anchor="end">8</text>
<rect x="160.1" y="281.8" width="0.8" height="4"/>
<text transform="translate(178.3,291.6) rotate(-90)" text-anchor="end">9</text>
<rect x="174.5" y="281.8" width="0.8" height="4"/>
<text transform="translate(192.7,291.6) rotate(-90)" text-anchor="end">10</text>
<rect x="188.9" y="281.8" width="0.8" height="4"/>
<text transform="translate(207.1,291.6) rotate(-90)" text-anchor="end">11</text>
<rect x="203.3" y="281.8" width="0.8" height="4"/>
<text transform="translate(221.6,291.6) rotate(-90)" text-anchor="end">12</text>
<rect x="217.8" y="281.8" width="0.8" height="4"/>
<text transform="translate(236.0,291.6) rotate(-90)" text-anchor="end">13</text>
<rect x="232.2" y="281.8" width="0.8" height="4"/>
<text transform="translate(250.4,291.6) rotate(-90)" text-anchor="end">14</text>
<rect x="246.6" y="281.8" width="0.8" height="4"/>
<text transform="translate(264.9,291.6) rotate(-90)" text-anchor="end">15</text>
<rect x="261.1" y="281.8" width="0.8" height="4"/>
<text transform="translate(279.3,291.6) rotate(-90)" text-anchor="end">16</text>
<rect x="275.5" y="281.8" width="0.8" height="4"/>
<text transform="translate(293.7,291.6) rotate(-90)" text-anchor="end">17</text>
<rect x="289.9" y="281.8" width="0.8" height="4"/>
<text transform="translate(308.2,291.6) rotate(-90)" text-anchor="end">18</text>
<rect x="304.4" y="281.8" width="0.8" height="4"/>
<text transform="translate(322.6,291.6) rotate(-90)" text-anchor="end">19</text>
<rect x="318.8" y="281.8" width="0.8" height="4"/>
<text transform="translate(337.0,291.6) rotate(-90)" text-anchor="end">20</text>
<rect x="333.2" y="281.8" width="0.8" height="4"/>
<text transform="translate(351.4,291.6) rotate(-90)" text-anchor="end">21</text>
<rect x="347.6" y="281.8" width="0.8" height="4"/>
<rect x="387.09999999999997" y="283.0" width="3.6" height="0.8"/>
<text x="393.7" y="286.8">0.0</text>
<rect x="387.09999999999997" y="252.7" width="3.6" height="0.8"/>
<text x="393.7" y="256.5">2.5</text>
<rect x="387.09999999999997" y="222.3" width="3.6" height="0.8"/>
<text x="393.7" y="226.1">5.0</text>
<rect x="387.09999999999997" y="192.0" width="3.6" height="0.8"/>
<text x="393.7" y="195.8">7.5</text>
<rect x="387.09999999999997" y="161.6" width="3.6" height="0.8"/>
<text x="393.7" y="165.4">10.0</text>
<rect x="387.09999999999997" y="131.3" width="3.6" height="0.8"/>
<text x="393.7" y="135.1">12.5</text>
<rect x="387.09999999999997" y="101.0" width="3.6" height="0.8"/>
<text x="393.7" y="104.8">15.0</text>
<rect x="387.09999999999997" y="70.6" width="3.6" height="0.8"/>
<text x="393.7" y="74.4">17.5</text>
<rect x="387.09999999999997" y="40.3" width="3.6" height="0.8"/>
<text x="393.7" y="44.1">20.0</text>
</g>
<linearGradient id="g3" x1="0" y1="1" x2="0" y2="0"><stop offset="0" stop-color="#03051a"/><stop offset="0.143" stop-color="#35193e"/><stop offset="0.286" stop-color="#701f57"/><stop offset="0.429" stop-color="#ad1759"/><stop offset="0.571" stop-color="#e13342"/><stop offset="0.714" stop-color="#f37651"/><stop offset="0.857" stop-color="#f6b48f"/><stop offset="1.0" stop-color="#faebdd"/></linearGradient>
<rect x="374.7" y="39.4" width="12.4" height="242.4" fill="url(#g3)"/></svg>
<div class="a" style="left:2px;top:216.1px;width:184.5px;height:135.1px;background:#fff;border:1.6px solid #1A72BB"></div>
<svg class="fig" style="left:4.3px;top:218.0px" width="180" height="131.5" viewBox="0 0 423.5 309.5"><rect width="423.5" height="309.5" fill="#fff"/>
<rect x="37.8" y="39.4" width="317.5" height="242.4" fill="#03051a"/>
<rect x="37.8" y="39.4" width="14.6" height="11.2" fill="#faebdd"/>
<rect x="52.2" y="50.4" width="14.6" height="11.2" fill="#faebdd"/>
<rect x="66.7" y="61.4" width="14.6" height="11.2" fill="#faebdd"/>
<rect x="81.1" y="72.5" width="14.6" height="11.2" fill="#faebdd"/>
<rect x="95.5" y="83.5" width="14.6" height="11.2" fill="#faebdd"/>
<rect x="110.0" y="94.5" width="14.6" height="11.2" fill="#faebdd"/>
<rect x="124.4" y="105.5" width="14.6" height="11.2" fill="#faebdd"/>
<rect x="138.8" y="116.5" width="14.6" height="11.2" fill="#faebdd"/>
<rect x="153.2" y="127.6" width="14.6" height="11.2" fill="#f9d8c2"/>
<rect x="167.7" y="138.6" width="14.6" height="11.2" fill="#faebdd"/>
<rect x="182.1" y="149.6" width="14.6" height="11.2" fill="#faebdd"/>
<rect x="196.5" y="160.6" width="14.6" height="11.2" fill="#f9d8c2"/>
<rect x="211.0" y="171.6" width="14.6" height="11.2" fill="#faebdd"/>
<rect x="225.4" y="182.7" width="14.6" height="11.2" fill="#faebdd"/>
<rect x="239.8" y="193.7" width="14.6" height="11.2" fill="#faebdd"/>
<rect x="254.2" y="204.7" width="14.6" height="11.2" fill="#faebdd"/>
<rect x="268.7" y="215.7" width="14.6" height="11.2" fill="#faebdd"/>
<rect x="283.1" y="226.7" width="14.6" height="11.2" fill="#f9d8c2"/>
<rect x="297.5" y="237.8" width="14.6" height="11.2" fill="#f9d8c2"/>
<rect x="312.0" y="248.8" width="14.6" height="11.2" fill="#faebdd"/>
<rect x="326.4" y="259.8" width="14.6" height="11.2" fill="#f59b76"/>
<rect x="340.8" y="270.8" width="14.6" height="11.2" fill="#faebdd"/>
<rect x="326.4" y="127.6" width="14.6" height="11.2" fill="#140c27"/>
<rect x="66.7" y="160.6" width="14.6" height="11.2" fill="#140c27"/>
<rect x="153.2" y="226.7" width="14.6" height="11.2" fill="#140c27"/>
<rect x="167.7" y="237.8" width="14.6" height="11.2" fill="#140c27"/>
<rect x="153.2" y="259.8" width="14.6" height="11.2" fill="#4d1b48"/>
<g font-family="DejaVu Sans,sans-serif" font-size="10.2" text-anchor="middle" fill="#9c9ca2">
<text x="45.0" y="48.7" fill="#262626">20</text>
<text x="59.4" y="48.7">0</text>
<text x="73.9" y="48.7">0</text>
<text x="88.3" y="48.7">0</text>
<text x="102.7" y="48.7">0</text>
<text x="117.2" y="48.7">0</text>
<text x="131.6" y="48.7">0</text>
<text x="146.0" y="48.7">0</text>
<text x="160.5" y="48.7">0</text>
<text x="174.9" y="48.7">0</text>
<text x="189.3" y="48.7">0</text>
<text x="203.7" y="48.7">0</text>
<text x="218.2" y="48.7">0</text>
<text x="232.6" y="48.7">0</text>
<text x="247.0" y="48.7">0</text>
<text x="261.5" y="48.7">0</text>
<text x="275.9" y="48.7">0</text>
<text x="290.3" y="48.7">0</text>
<text x="304.8" y="48.7">0</text>
<text x="319.2" y="48.7">0</text>
<text x="333.6" y="48.7">0</text>
<text x="348.0" y="48.7">0</text>
<text x="45.0" y="59.7">0</text>
<text x="59.4" y="59.7" fill="#262626">20</text>
<text x="73.9" y="59.7">0</text>
<text x="88.3" y="59.7">0</text>
<text x="102.7" y="59.7">0</text>
<text x="117.2" y="59.7">0</text>
<text x="131.6" y="59.7">0</text>
<text x="146.0" y="59.7">0</text>
<text x="160.5" y="59.7">0</text>
<text x="174.9" y="59.7">0</text>
<text x="189.3" y="59.7">0</text>
<text x="203.7" y="59.7">0</text>
<text x="218.2" y="59.7">0</text>
<text x="232.6" y="59.7">0</text>
<text x="247.0" y="59.7">0</text>
<text x="261.5" y="59.7">0</text>
<text x="275.9" y="59.7">0</text>
<text x="290.3" y="59.7">0</text>
<text x="304.8" y="59.7">0</text>
<text x="319.2" y="59.7">0</text>
<text x="333.6" y="59.7">0</text>
<text x="348.0" y="59.7">0</text>
<text x="45.0" y="70.7">0</text>
<text x="59.4" y="70.7">0</text>
<text x="73.9" y="70.7" fill="#262626">20</text>
<text x="88.3" y="70.7">0</text>
<text x="102.7" y="70.7">0</text>
<text x="117.2" y="70.7">0</text>
<text x="131.6" y="70.7">0</text>
<text x="146.0" y="70.7">0</text>
<text x="160.5" y="70.7">0</text>
<text x="174.9" y="70.7">0</text>
<text x="189.3" y="70.7">0</text>
<text x="203.7" y="70.7">0</text>
<text x="218.2" y="70.7">0</text>
<text x="232.6" y="70.7">0</text>
<text x="247.0" y="70.7">0</text>
<text x="261.5" y="70.7">0</text>
<text x="275.9" y="70.7">0</text>
<text x="290.3" y="70.7">0</text>
<text x="304.8" y="70.7">0</text>
<text x="319.2" y="70.7">0</text>
<text x="333.6" y="70.7">0</text>
<text x="348.0" y="70.7">0</text>
<text x="45.0" y="81.8">0</text>
<text x="59.4" y="81.8">0</text>
<text x="73.9" y="81.8">0</text>
<text x="88.3" y="81.8" fill="#262626">20</text>
<text x="102.7" y="81.8">0</text>
<text x="117.2" y="81.8">0</text>
<text x="131.6" y="81.8">0</text>
<text x="146.0" y="81.8">0</text>
<text x="160.5" y="81.8">0</text>
<text x="174.9" y="81.8">0</text>
<text x="189.3" y="81.8">0</text>
<text x="203.7" y="81.8">0</text>
<text x="218.2" y="81.8">0</text>
<text x="232.6" y="81.8">0</text>
<text x="247.0" y="81.8">0</text>
<text x="261.5" y="81.8">0</text>
<text x="275.9" y="81.8">0</text>
<text x="290.3" y="81.8">0</text>
<text x="304.8" y="81.8">0</text>
<text x="319.2" y="81.8">0</text>
<text x="333.6" y="81.8">0</text>
<text x="348.0" y="81.8">0</text>
<text x="45.0" y="92.8">0</text>
<text x="59.4" y="92.8">0</text>
<text x="73.9" y="92.8">0</text>
<text x="88.3" y="92.8">0</text>
<text x="102.7" y="92.8" fill="#262626">20</text>
<text x="117.2" y="92.8">0</text>
<text x="131.6" y="92.8">0</text>
<text x="146.0" y="92.8">0</text>
<text x="160.5" y="92.8">0</text>
<text x="174.9" y="92.8">0</text>
<text x="189.3" y="92.8">0</text>
<text x="203.7" y="92.8">0</text>
<text x="218.2" y="92.8">0</text>
<text x="232.6" y="92.8">0</text>
<text x="247.0" y="92.8">0</text>
<text x="261.5" y="92.8">0</text>
<text x="275.9" y="92.8">0</text>
<text x="290.3" y="92.8">0</text>
<text x="304.8" y="92.8">0</text>
<text x="319.2" y="92.8">0</text>
<text x="333.6" y="92.8">0</text>
<text x="348.0" y="92.8">0</text>
<text x="45.0" y="103.8">0</text>
<text x="59.4" y="103.8">0</text>
<text x="73.9" y="103.8">0</text>
<text x="88.3" y="103.8">0</text>
<text x="102.7" y="103.8">0</text>
<text x="117.2" y="103.8" fill="#262626">20</text>
<text x="131.6" y="103.8">0</text>
<text x="146.0" y="103.8">0</text>
<text x="160.5" y="103.8">0</text>
<text x="174.9" y="103.8">0</text>
<text x="189.3" y="103.8">0</text>
<text x="203.7" y="103.8">0</text>
<text x="218.2" y="103.8">0</text>
<text x="232.6" y="103.8">0</text>
<text x="247.0" y="103.8">0</text>
<text x="261.5" y="103.8">0</text>
<text x="275.9" y="103.8">0</text>
<text x="290.3" y="103.8">0</text>
<text x="304.8" y="103.8">0</text>
<text x="319.2" y="103.8">0</text>
<text x="333.6" y="103.8">0</text>
<text x="348.0" y="103.8">0</text>
<text x="45.0" y="114.8">0</text>
<text x="59.4" y="114.8">0</text>
<text x="73.9" y="114.8">0</text>
<text x="88.3" y="114.8">0</text>
<text x="102.7" y="114.8">0</text>
<text x="117.2" y="114.8">0</text>
<text x="131.6" y="114.8" fill="#262626">20</text>
<text x="146.0" y="114.8">0</text>
<text x="160.5" y="114.8">0</text>
<text x="174.9" y="114.8">0</text>
<text x="189.3" y="114.8">0</text>
<text x="203.7" y="114.8">0</text>
<text x="218.2" y="114.8">0</text>
<text x="232.6" y="114.8">0</text>
<text x="247.0" y="114.8">0</text>
<text x="261.5" y="114.8">0</text>
<text x="275.9" y="114.8">0</text>
<text x="290.3" y="114.8">0</text>
<text x="304.8" y="114.8">0</text>
<text x="319.2" y="114.8">0</text>
<text x="333.6" y="114.8">0</text>
<text x="348.0" y="114.8">0</text>
<text x="45.0" y="125.8">0</text>
<text x="59.4" y="125.8">0</text>
<text x="73.9" y="125.8">0</text>
<text x="88.3" y="125.8">0</text>
<text x="102.7" y="125.8">0</text>
<text x="117.2" y="125.8">0</text>
<text x="131.6" y="125.8">0</text>
<text x="146.0" y="125.8" fill="#262626">20</text>
<text x="160.5" y="125.8">0</text>
<text x="174.9" y="125.8">0</text>
<text x="189.3" y="125.8">0</text>
<text x="203.7" y="125.8">0</text>
<text x="218.2" y="125.8">0</text>
<text x="232.6" y="125.8">0</text>
<text x="247.0" y="125.8">0</text>
<text x="261.5" y="125.8">0</text>
<text x="275.9" y="125.8">0</text>
<text x="290.3" y="125.8">0</text>
<text x="304.8" y="125.8">0</text>
<text x="319.2" y="125.8">0</text>
<text x="333.6" y="125.8">0</text>
<text x="348.0" y="125.8">0</text>
<text x="45.0" y="136.9">0</text>
<text x="59.4" y="136.9">0</text>
<text x="73.9" y="136.9">0</text>
<text x="88.3" y="136.9">0</text>
<text x="102.7" y="136.9">0</text>
<text x="117.2" y="136.9">0</text>
<text x="131.6" y="136.9">0</text>
<text x="146.0" y="136.9">0</text>
<text x="160.5" y="136.9" fill="#262626">19</text>
<text x="174.9" y="136.9">0</text>
<text x="189.3" y="136.9">0</text>
<text x="203.7" y="136.9">0</text>
<text x="218.2" y="136.9">0</text>
<text x="232.6" y="136.9">0</text>
<text x="247.0" y="136.9">0</text>
<text x="261.5" y="136.9">0</text>
<text x="275.9" y="136.9">0</text>
<text x="290.3" y="136.9">0</text>
<text x="304.8" y="136.9">0</text>
<text x="319.2" y="136.9">0</text>
<text x="333.6" y="136.9">1</text>
<text x="348.0" y="136.9">0</text>
<text x="45.0" y="147.9">0</text>
<text x="59.4" y="147.9">0</text>
<text x="73.9" y="147.9">0</text>
<text x="88.3" y="147.9">0</text>
<text x="102.7" y="147.9">0</text>
<text x="117.2" y="147.9">0</text>
<text x="131.6" y="147.9">0</text>
<text x="146.0" y="147.9">0</text>
<text x="160.5" y="147.9">0</text>
<text x="174.9" y="147.9" fill="#262626">20</text>
<text x="189.3" y="147.9">0</text>
<text x="203.7" y="147.9">0</text>
<text x="218.2" y="147.9">0</text>
<text x="232.6" y="147.9">0</text>
<text x="247.0" y="147.9">0</text>
<text x="261.5" y="147.9">0</text>
<text x="275.9" y="147.9">0</text>
<text x="290.3" y="147.9">0</text>
<text x="304.8" y="147.9">0</text>
<text x="319.2" y="147.9">0</text>
<text x="333.6" y="147.9">0</text>
<text x="348.0" y="147.9">0</text>
<text x="45.0" y="158.9">0</text>
<text x="59.4" y="158.9">0</text>
<text x="73.9" y="158.9">0</text>
<text x="88.3" y="158.9">0</text>
<text x="102.7" y="158.9">0</text>
<text x="117.2" y="158.9">0</text>
<text x="131.6" y="158.9">0</text>
<text x="146.0" y="158.9">0</text>
<text x="160.5" y="158.9">0</text>
<text x="174.9" y="158.9">0</text>
<text x="189.3" y="158.9" fill="#262626">20</text>
<text x="203.7" y="158.9">0</text>
<text x="218.2" y="158.9">0</text>
<text x="232.6" y="158.9">0</text>
<text x="247.0" y="158.9">0</text>
<text x="261.5" y="158.9">0</text>
<text x="275.9" y="158.9">0</text>
<text x="290.3" y="158.9">0</text>
<text x="304.8" y="158.9">0</text>
<text x="319.2" y="158.9">0</text>
<text x="333.6" y="158.9">0</text>
<text x="348.0" y="158.9">0</text>
<text x="45.0" y="169.9">0</text>
<text x="59.4" y="169.9">0</text>
<text x="73.9" y="169.9">1</text>
<text x="88.3" y="169.9">0</text>
<text x="102.7" y="169.9">0</text>
<text x="117.2" y="169.9">0</text>
<text x="131.6" y="169.9">0</text>
<text x="146.0" y="169.9">0</text>
<text x="160.5" y="169.9">0</text>
<text x="174.9" y="169.9">0</text>
<text x="189.3" y="169.9">0</text>
<text x="203.7" y="169.9" fill="#262626">19</text>
<text x="218.2" y="169.9">0</text>
<text x="232.6" y="169.9">0</text>
<text x="247.0" y="169.9">0</text>
<text x="261.5" y="169.9">0</text>
<text x="275.9" y="169.9">0</text>
<text x="290.3" y="169.9">0</text>
<text x="304.8" y="169.9">0</text>
<text x="319.2" y="169.9">0</text>
<text x="333.6" y="169.9">0</text>
<text x="348.0" y="169.9">0</text>
<text x="45.0" y="181.0">0</text>
<text x="59.4" y="181.0">0</text>
<text x="73.9" y="181.0">0</text>
<text x="88.3" y="181.0">0</text>
<text x="102.7" y="181.0">0</text>
<text x="117.2" y="181.0">0</text>
<text x="131.6" y="181.0">0</text>
<text x="146.0" y="181.0">0</text>
<text x="160.5" y="181.0">0</text>
<text x="174.9" y="181.0">0</text>
<text x="189.3" y="181.0">0</text>
<text x="203.7" y="181.0">0</text>
<text x="218.2" y="181.0" fill="#262626">20</text>
<text x="232.6" y="181.0">0</text>
<text x="247.0" y="181.0">0</text>
<text x="261.5" y="181.0">0</text>
<text x="275.9" y="181.0">0</text>
<text x="290.3" y="181.0">0</text>
<text x="304.8" y="181.0">0</text>
<text x="319.2" y="181.0">0</text>
<text x="333.6" y="181.0">0</text>
<text x="348.0" y="181.0">0</text>
<text x="45.0" y="192.0">0</text>
<text x="59.4" y="192.0">0</text>
<text x="73.9" y="192.0">0</text>
<text x="88.3" y="192.0">0</text>
<text x="102.7" y="192.0">0</text>
<text x="117.2" y="192.0">0</text>
<text x="131.6" y="192.0">0</text>
<text x="146.0" y="192.0">0</text>
<text x="160.5" y="192.0">0</text>
<text x="174.9" y="192.0">0</text>
<text x="189.3" y="192.0">0</text>
<text x="203.7" y="192.0">0</text>
<text x="218.2" y="192.0">0</text>
<text x="232.6" y="192.0" fill="#262626">20</text>
<text x="247.0" y="192.0">0</text>
<text x="261.5" y="192.0">0</text>
<text x="275.9" y="192.0">0</text>
<text x="290.3" y="192.0">0</text>
<text x="304.8" y="192.0">0</text>
<text x="319.2" y="192.0">0</text>
<text x="333.6" y="192.0">0</text>
<text x="348.0" y="192.0">0</text>
<text x="45.0" y="203.0">0</text>
<text x="59.4" y="203.0">0</text>
<text x="73.9" y="203.0">0</text>
<text x="88.3" y="203.0">0</text>
<text x="102.7" y="203.0">0</text>
<text x="117.2" y="203.0">0</text>
<text x="131.6" y="203.0">0</text>
<text x="146.0" y="203.0">0</text>
<text x="160.5" y="203.0">0</text>
<text x="174.9" y="203.0">0</text>
<text x="189.3" y="203.0">0</text>
<text x="203.7" y="203.0">0</text>
<text x="218.2" y="203.0">0</text>
<text x="232.6" y="203.0">0</text>
<text x="247.0" y="203.0" fill="#262626">20</text>
<text x="261.5" y="203.0">0</text>
<text x="275.9" y="203.0">0</text>
<text x="290.3" y="203.0">0</text>
<text x="304.8" y="203.0">0</text>
<text x="319.2" y="203.0">0</text>
<text x="333.6" y="203.0">0</text>
<text x="348.0" y="203.0">0</text>
<text x="45.0" y="214.0">0</text>
<text x="59.4" y="214.0">0</text>
<text x="73.9" y="214.0">0</text>
<text x="88.3" y="214.0">0</text>
<text x="102.7" y="214.0">0</text>
<text x="117.2" y="214.0">0</text>
<text x="131.6" y="214.0">0</text>
<text x="146.0" y="214.0">0</text>
<text x="160.5" y="214.0">0</text>
<text x="174.9" y="214.0">0</text>
<text x="189.3" y="214.0">0</text>
<text x="203.7" y="214.0">0</text>
<text x="218.2" y="214.0">0</text>
<text x="232.6" y="214.0">0</text>
<text x="247.0" y="214.0">0</text>
<text x="261.5" y="214.0" fill="#262626">20</text>
<text x="275.9" y="214.0">0</text>
<text x="290.3" y="214.0">0</text>
<text x="304.8" y="214.0">0</text>
<text x="319.2" y="214.0">0</text>
<text x="333.6" y="214.0">0</text>
<text x="348.0" y="214.0">0</text>
<text x="45.0" y="225.0">0</text>
<text x="59.4" y="225.0">0</text>
<text x="73.9" y="225.0">0</text>
<text x="88.3" y="225.0">0</text>
<text x="102.7" y="225.0">0</text>
<text x="117.2" y="225.0">0</text>
<text x="131.6" y="225.0">0</text>
<text x="146.0" y="225.0">0</text>
<text x="160.5" y="225.0">0</text>
<text x="174.9" y="225.0">0</text>
<text x="189.3" y="225.0">0</text>
<text x="203.7" y="225.0">0</text>
<text x="218.2" y="225.0">0</text>
<text x="232.6" y="225.0">0</text>
<text x="247.0" y="225.0">0</text>
<text x="261.5" y="225.0">0</text>
<text x="275.9" y="225.0" fill="#262626">20</text>
<text x="290.3" y="225.0">0</text>
<text x="304.8" y="225.0">0</text>
<text x="319.2" y="225.0">0</text>
<text x="333.6" y="225.0">0</text>
<text x="348.0" y="225.0">0</text>
<text x="45.0" y="236.1">0</text>
<text x="59.4" y="236.1">0</text>
<text x="73.9" y="236.1">0</text>
<text x="88.3" y="236.1">0</text>
<text x="102.7" y="236.1">0</text>
<text x="117.2" y="236.1">0</text>
<text x="131.6" y="236.1">0</text>
<text x="146.0" y="236.1">0</text>
<text x="160.5" y="236.1">1</text>
<text x="174.9" y="236.1">0</text>
<text x="189.3" y="236.1">0</text>
<text x="203.7" y="236.1">0</text>
<text x="218.2" y="236.1">0</text>
<text x="232.6" y="236.1">0</text>
<text x="247.0" y="236.1">0</text>
<text x="261.5" y="236.1">0</text>
<text x="275.9" y="236.1">0</text>
<text x="290.3" y="236.1" fill="#262626">19</text>
<text x="304.8" y="236.1">0</text>
<text x="319.2" y="236.1">0</text>
<text x="333.6" y="236.1">0</text>
<text x="348.0" y="236.1">0</text>
<text x="45.0" y="247.1">0</text>
<text x="59.4" y="247.1">0</text>
<text x="73.9" y="247.1">0</text>
<text x="88.3" y="247.1">0</text>
<text x="102.7" y="247.1">0</text>
<text x="117.2" y="247.1">0</text>
<text x="131.6" y="247.1">0</text>
<text x="146.0" y="247.1">0</text>
<text x="160.5" y="247.1">0</text>
<text x="174.9" y="247.1">1</text>
<text x="189.3" y="247.1">0</text>
<text x="203.7" y="247.1">0</text>
<text x="218.2" y="247.1">0</text>
<text x="232.6" y="247.1">0</text>
<text x="247.0" y="247.1">0</text>
<text x="261.5" y="247.1">0</text>
<text x="275.9" y="247.1">0</text>
<text x="290.3" y="247.1">0</text>
<text x="304.8" y="247.1" fill="#262626">19</text>
<text x="319.2" y="247.1">0</text>
<text x="333.6" y="247.1">0</text>
<text x="348.0" y="247.1">0</text>
<text x="45.0" y="258.1">0</text>
<text x="59.4" y="258.1">0</text>
<text x="73.9" y="258.1">0</text>
<text x="88.3" y="258.1">0</text>
<text x="102.7" y="258.1">0</text>
<text x="117.2" y="258.1">0</text>
<text x="131.6" y="258.1">0</text>
<text x="146.0" y="258.1">0</text>
<text x="160.5" y="258.1">0</text>
<text x="174.9" y="258.1">0</text>
<text x="189.3" y="258.1">0</text>
<text x="203.7" y="258.1">0</text>
<text x="218.2" y="258.1">0</text>
<text x="232.6" y="258.1">0</text>
<text x="247.0" y="258.1">0</text>
<text x="261.5" y="258.1">0</text>
<text x="275.9" y="258.1">0</text>
<text x="290.3" y="258.1">0</text>
<text x="304.8" y="258.1">0</text>
<text x="319.2" y="258.1" fill="#262626">20</text>
<text x="333.6" y="258.1">0</text>
<text x="348.0" y="258.1">0</text>
<text x="45.0" y="269.1">0</text>
<text x="59.4" y="269.1">0</text>
<text x="73.9" y="269.1">0</text>
<text x="88.3" y="269.1">0</text>
<text x="102.7" y="269.1">0</text>
<text x="117.2" y="269.1">0</text>
<text x="131.6" y="269.1">0</text>
<text x="146.0" y="269.1">0</text>
<text x="160.5" y="269.1">4</text>
<text x="174.9" y="269.1">0</text>
<text x="189.3" y="269.1">0</text>
<text x="203.7" y="269.1">0</text>
<text x="218.2" y="269.1">0</text>
<text x="232.6" y="269.1">0</text>
<text x="247.0" y="269.1">0</text>
<text x="261.5" y="269.1">0</text>
<text x="275.9" y="269.1">0</text>
<text x="290.3" y="269.1">0</text>
<text x="304.8" y="269.1">0</text>
<text x="319.2" y="269.1">0</text>
<text x="333.6" y="269.1" fill="#262626">16</text>
<text x="348.0" y="269.1">0</text>
<text x="45.0" y="280.1">0</text>
<text x="59.4" y="280.1">0</text>
<text x="73.9" y="280.1">0</text>
<text x="88.3" y="280.1">0</text>
<text x="102.7" y="280.1">0</text>
<text x="117.2" y="280.1">0</text>
<text x="131.6" y="280.1">0</text>
<text x="146.0" y="280.1">0</text>
<text x="160.5" y="280.1">0</text>
<text x="174.9" y="280.1">0</text>
<text x="189.3" y="280.1">0</text>
<text x="203.7" y="280.1">0</text>
<text x="218.2" y="280.1">0</text>
<text x="232.6" y="280.1">0</text>
<text x="247.0" y="280.1">0</text>
<text x="261.5" y="280.1">0</text>
<text x="275.9" y="280.1">0</text>
<text x="290.3" y="280.1">0</text>
<text x="304.8" y="280.1">0</text>
<text x="319.2" y="280.1">0</text>
<text x="333.6" y="280.1">0</text>
<text x="348.0" y="280.1" fill="#262626">20</text>
</g>
<text x="196.5" y="22.0" font-family="DejaVu Sans,sans-serif" font-size="20.3" text-anchor="middle" fill="#262626">Confusion Matrix for KNN</text>
<text x="196.5" y="36.4" font-family="DejaVu Sans,sans-serif" font-size="10.2" text-anchor="middle" fill="#262626">Predicted label</text>
<text transform="translate(13.2,162.9) rotate(-90)" font-family="DejaVu Sans,sans-serif" font-size="9.6" text-anchor="middle" fill="#262626">Actual label</text>
<g font-family="DejaVu Sans,sans-serif" font-size="9.6" fill="#262626">
<text transform="translate(29.2,45.9) rotate(-90)" text-anchor="middle">0</text>
<rect x="33.8" y="44.5" width="4" height="0.8"/>
<text transform="translate(29.2,67.9) rotate(-90)" text-anchor="middle">2</text>
<rect x="33.8" y="66.5" width="4" height="0.8"/>
<text transform="translate(29.2,90.0) rotate(-90)" text-anchor="middle">4</text>
<rect x="33.8" y="88.6" width="4" height="0.8"/>
<text transform="translate(29.2,112.0) rotate(-90)" text-anchor="middle">6</text>
<rect x="33.8" y="110.6" width="4" height="0.8"/>
<text transform="translate(29.2,134.1) rotate(-90)" text-anchor="middle">8</text>
<rect x="33.8" y="132.7" width="4" height="0.8"/>
<text transform="translate(29.2,157.9) rotate(-90)" text-anchor="middle">10</text>
<rect x="33.8" y="154.7" width="4" height="0.8"/>
<text transform="translate(29.2,180.0) rotate(-90)" text-anchor="middle">12</text>
<rect x="33.8" y="176.8" width="4" height="0.8"/>
<text transform="translate(29.2,202.0) rotate(-90)" text-anchor="middle">14</text>
<rect x="33.8" y="198.8" width="4" height="0.8"/>
<text transform="translate(29.2,224.0) rotate(-90)" text-anchor="middle">16</text>
<rect x="33.8" y="220.8" width="4" height="0.8"/>
<text transform="translate(29.2,246.1) rotate(-90)" text-anchor="middle">18</text>
<rect x="33.8" y="242.9" width="4" height="0.8"/>
<text transform="translate(29.2,268.1) rotate(-90)" text-anchor="middle">20</text>
<rect x="33.8" y="264.9" width="4" height="0.8"/>
<text transform="translate(48.4,291.6) rotate(-90)" text-anchor="end">0</text>
<rect x="44.6" y="281.8" width="0.8" height="4"/>
<text transform="translate(62.8,291.6) rotate(-90)" text-anchor="end">1</text>
<rect x="59.0" y="281.8" width="0.8" height="4"/>
<text transform="translate(77.3,291.6) rotate(-90)" text-anchor="end">2</text>
<rect x="73.5" y="281.8" width="0.8" height="4"/>
<text transform="translate(91.7,291.6) rotate(-90)" text-anchor="end">3</text>
<rect x="87.9" y="281.8" width="0.8" height="4"/>
<text transform="translate(106.1,291.6) rotate(-90)" text-anchor="end">4</text>
<rect x="102.3" y="281.8" width="0.8" height="4"/>
<text transform="translate(120.6,291.6) rotate(-90)" text-anchor="end">5</text>
<rect x="116.8" y="281.8" width="0.8" height="4"/>
<text transform="translate(135.0,291.6) rotate(-90)" text-anchor="end">6</text>
<rect x="131.2" y="281.8" width="0.8" height="4"/>
<text transform="translate(149.4,291.6) rotate(-90)" text-anchor="end">7</text>
<rect x="145.6" y="281.8" width="0.8" height="4"/>
<text transform="translate(163.9,291.6) rotate(-90)" text-anchor="end">8</text>
<rect x="160.1" y="281.8" width="0.8" height="4"/>
<text transform="translate(178.3,291.6) rotate(-90)" text-anchor="end">9</text>
<rect x="174.5" y="281.8" width="0.8" height="4"/>
<text transform="translate(192.7,291.6) rotate(-90)" text-anchor="end">10</text>
<rect x="188.9" y="281.8" width="0.8" height="4"/>
<text transform="translate(207.1,291.6) rotate(-90)" text-anchor="end">11</text>
<rect x="203.3" y="281.8" width="0.8" height="4"/>
<text transform="translate(221.6,291.6) rotate(-90)" text-anchor="end">12</text>
<rect x="217.8" y="281.8" width="0.8" height="4"/>
<text transform="translate(236.0,291.6) rotate(-90)" text-anchor="end">13</text>
<rect x="232.2" y="281.8" width="0.8" height="4"/>
<text transform="translate(250.4,291.6) rotate(-90)" text-anchor="end">14</text>
<rect x="246.6" y="281.8" width="0.8" height="4"/>
<text transform="translate(264.9,291.6) rotate(-90)" text-anchor="end">15</text>
<rect x="261.1" y="281.8" width="0.8" height="4"/>
<text transform="translate(279.3,291.6) rotate(-90)" text-anchor="end">16</text>
<rect x="275.5" y="281.8" width="0.8" height="4"/>
<text transform="translate(293.7,291.6) rotate(-90)" text-anchor="end">17</text>
<rect x="289.9" y="281.8" width="0.8" height="4"/>
<text transform="translate(308.2,291.6) rotate(-90)" text-anchor="end">18</text>
<rect x="304.4" y="281.8" width="0.8" height="4"/>
<text transform="translate(322.6,291.6) rotate(-90)" text-anchor="end">19</text>
<rect x="318.8" y="281.8" width="0.8" height="4"/>
<text transform="translate(337.0,291.6) rotate(-90)" text-anchor="end">20</text>
<rect x="333.2" y="281.8" width="0.8" height="4"/>
<text transform="translate(351.4,291.6) rotate(-90)" text-anchor="end">21</text>
<rect x="347.6" y="281.8" width="0.8" height="4"/>
<rect x="387.09999999999997" y="283.0" width="3.6" height="0.8"/>
<text x="393.7" y="286.8">0.0</text>
<rect x="387.09999999999997" y="252.7" width="3.6" height="0.8"/>
<text x="393.7" y="256.5">2.5</text>
<rect x="387.09999999999997" y="222.3" width="3.6" height="0.8"/>
<text x="393.7" y="226.1">5.0</text>
<rect x="387.09999999999997" y="192.0" width="3.6" height="0.8"/>
<text x="393.7" y="195.8">7.5</text>
<rect x="387.09999999999997" y="161.6" width="3.6" height="0.8"/>
<text x="393.7" y="165.4">10.0</text>
<rect x="387.09999999999997" y="131.3" width="3.6" height="0.8"/>
<text x="393.7" y="135.1">12.5</text>
<rect x="387.09999999999997" y="101.0" width="3.6" height="0.8"/>
<text x="393.7" y="104.8">15.0</text>
<rect x="387.09999999999997" y="70.6" width="3.6" height="0.8"/>
<text x="393.7" y="74.4">17.5</text>
<rect x="387.09999999999997" y="40.3" width="3.6" height="0.8"/>
<text x="393.7" y="44.1">20.0</text>
</g>
<linearGradient id="g4" x1="0" y1="1" x2="0" y2="0"><stop offset="0" stop-color="#03051a"/><stop offset="0.143" stop-color="#35193e"/><stop offset="0.286" stop-color="#701f57"/><stop offset="0.429" stop-color="#ad1759"/><stop offset="0.571" stop-color="#e13342"/><stop offset="0.714" stop-color="#f37651"/><stop offset="0.857" stop-color="#f6b48f"/><stop offset="1.0" stop-color="#faebdd"/></linearGradient>
<rect x="374.7" y="39.4" width="12.4" height="242.4" fill="url(#g4)"/></svg>
</div>
<svg style="left:1487px;top:152px" width="9" height="6"><path d="M0.5 5.5 L4.5 0.5 L8.5 5.5Z" fill="#455364"/></svg>
<svg style="left:1487px;top:491px" width="9" height="6"><path d="M0.5 0.5 L4.5 5.5 L8.5 0.5Z" fill="#455364"/></svg>
<div class="a" style="left:1487px;top:159px;width:9px;height:330px;border:1px solid #455364;border-radius:4px"></div>
<div class="a" style="left:1487px;top:362px;width:9px;height:125px;background:#60798B;border-radius:4px"></div>
<div class="a" style="left:1118px;top:504px;width:83px;height:16.5px;background:#455364;border-radius:3px"></div>
<div class="t ui" style="left:1121px;top:507.8px;font-size:10.1px">Variable Explorer</div>
<div class="a" style="left:1202.5px;top:502px;width:27.5px;height:18.5px;background:#54687A;border-top:2.5px solid #259AE9;border-radius:0 0 3px 3px"></div>
<div class="t ui" style="left:1205.5px;top:507.8px;font-size:9.8px">Plots</div>
<div class="a" style="left:1176.5px;top:118px;width:58.5px;height:18.5px;border:1px solid #455364;border-radius:3px"></div>
<div class="t ui" style="left:1186px;top:122.5px;font-size:10.4px;color:#9DA9B5">129 %</div>
<div class="a" style="left:880.5px;top:539.5px;width:53.5px;height:21.3px;z-index:2;background:#54687A;border-radius:4px 4px 0 0;border-bottom:2.6px solid #259AE9"></div>
<div class="t ui" style="left:888px;top:545.3px;z-index:3;font-size:10.1px">history.py</div>
<div class="box" style="left:847px;top:560px;width:652px;height:221px"></div>
<div class="a" style="left:852px;top:750.2px;width:629px;height:14px;background:#2b353e"></div>
<div class="mono" style="left:852px;top:564.3px"><span class="str">Digital_Modulation'</span>)</div>
<div class="mono" style="left:852px;top:579.9px">runfile(<span class="str">'D:/Python_Imp/Digital_Modulation/demodulationClassify.py'</span>, wdir=<span class="str">'D:/Python_Imp/</span></div>
<div class="mono" style="left:852px;top:595.5px"><span class="str">Digital_Modulation'</span>)</div>
<div class="mono" style="left:852px;top:626.6px"><span class="cm">## ---(Sun Mar 26 13:36:27 2023)---</span></div>
<div class="mono" style="left:852px;top:642.2px">runfile(<span class="str">'D:/Python_Imp/Medical_chat/training.py'</span>, wdir=<span class="str">'D:/Python_Imp/Medical_chat'</span>)</div>
<div class="mono" style="left:852px;top:657.8px">runfile(<span class="str">'D:/Python_Imp/Medical_chat/training.py'</span>, wdir=<span class="str">'D:/Python_Imp/Medical_chat'</span>)</div>
<div class="mono" style="left:852px;top:673.4px">runfile(<span class="str">'D:/Python_Imp/crop/svm.py'</span>, wdir=<span class="str">'D:/Python_Imp/crop'</span>)</div>
<div class="mono" style="left:852px;top:688.9px">runfile(<span class="str">'D:/Python_Imp/Medical_chat/training.py'</span>, wdir=<span class="str">'D:/Python_Imp/Medical_chat'</span>)</div>
<div class="mono" style="left:852px;top:720.1px"><span class="cm">## ---(Mon Mar 27 09:56:04 2023)---</span></div>
<div class="mono" style="left:852px;top:735.7px">runfile(<span class="str">'D:/Python_Imp/crop/svm.py'</span>, wdir=<span class="str">'D:/Python_Imp/crop'</span>)</div>
<div class="mono" style="left:852px;top:751.3px">runfile(<span class="str">'D:/Python_Imp/crop/ML_Classification.py'</span>, wdir=<span class="str">'D:/Python_Imp/crop'</span>)</div>
<svg style="left:1486px;top:566px" width="9" height="6"><path d="M0.5 5.5 L4.5 0.5 L8.5 5.5Z" fill="#455364"/></svg>
<svg style="left:1486px;top:768px" width="9" height="6"><path d="M0.5 0.5 L4.5 5.5 L8.5 0.5Z" fill="#455364"/></svg>
<div class="a" style="left:1486px;top:574px;width:9px;height:192px;border:1px solid #455364;border-radius:4px"></div>
<div class="a" style="left:1486px;top:746px;width:9px;height:20px;background:#60798B;border-radius:4px"></div>
<div class="a" style="left:1141.7px;top:781px;width:37px;height:19.5px;background:#54687A;border-top:2.5px solid #259AE9;border-radius:0 0 3px 3px"></div>
<div class="t ui" style="left:1144.5px;top:787px;font-size:10.2px">History</div>
<div class="a" style="left:1180px;top:783px;width:24.5px;height:17.5px;background:#455364;border-radius:3px"></div>
<div class="t ui" style="left:1183px;top:787px;font-size:10.4px">Help</div>
<div class="t ui" style="left:1050px;top:806.8px;font-size:9.9px">LSP Python: ready</div>
<div class="t ui" style="left:1159.5px;top:806.8px;font-size:9.9px">conda (Python 3.9.13)</div>
<div class="t ui" style="left:1270px;top:806.8px;font-size:9.9px">Line 15, Col 1</div>
<div class="t ui" style="left:1343.5px;top:806.8px;font-size:9.9px">UTF-8</div>
<div class="t ui" style="left:1383.5px;top:806.8px;font-size:9.9px">CRLF</div>
<div class="t ui" style="left:1418.5px;top:806.8px;font-size:9.9px">RW</div>
<div class="a" style="left:1432.5px;top:784px;width:30px;height:31px;background:#1c2126"></div>
<div class="a" style="left:1464px;top:784px;width:30px;height:31px;background:#1c2126"></div>
<div class="a" style="left:1441px;top:793px;width:4.5px;height:14px;background:#fff"></div><div class="a" style="left:1449.5px;top:793px;width:4.5px;height:14px;background:#fff"></div>
<svg style="left:1470px;top:793px" width="19" height="14" viewBox="0 0 19 14"><rect x="0.75" y="0.75" width="17.5" height="12.5" fill="none" stroke="#fff" stroke-width="1.5"/><circle cx="9.5" cy="5.2" r="2.2" fill="#fff"/><path d="M4.5 12.5 C4.5 8.5 14.5 8.5 14.5 12.5Z" fill="#fff"/></svg>
<div class="a" style="left:718px;top:83.5px;width:697px;height:19px;background:#18232B;border-radius:3px"></div>
<div class="a" style="left:1405px;top:84.5px;width:1px;height:17px;background:#2f3b47"></div>
<div class="t ui" style="left:725.5px;top:88.3px;font-size:10px">D:\Python_Imp\crop</div>
<svg style="left:0;top:0" width="1500" height="844" viewBox="0 0 1500 844"><path d="M1407.5 91.3 h5 l-2.5 2.8z" fill="#455364"/>
<rect x="3.2" y="29.6" width="12" height="12.4" rx="2.4" fill="#d4605a"/><path d="M5 31 l5 9 M4 36 l7 -5 M7 30 v11 M4 39 l5 -3" stroke="#f3d6d4" stroke-width=".8" fill="none"/><path d="M9.6 34 h6 v8.4 h-6z" fill="#fff"/><path d="M9.6 34 l2 -2.4 h3.6 v2.4z" fill="#e9a5a1"/><text x="9.3" y="41.8" font-family="Liberation Sans,sans-serif" font-size="13.5" fill="#4a4a4a">s</text>
<rect x="1379" y="34.9" width="9.4" height="1" fill="#1a1a1a"/>
<rect x="1424.5" y="33.8" width="6.5" height="6.5" rx="1.2" fill="none" stroke="#333" stroke-width="1"/><path d="M1426.5 33.8 v-.8 q0 -1.2 1.2 -1.2 h4.3 q1.2 0 1.2 1.2 v4.3 q0 1.2 -1.2 1.2 h-.7" fill="none" stroke="#333" stroke-width="1"/>
<path d="M1470.5 31.5 l9 9 m0 -9 l-9 9" stroke="#222" stroke-width="1.1"/>
<path d="M15.8 86.3 h6 l4.5 4.5 v8.4 q0 .6 -.6 .6 h-9.9 q-.6 0 -.6 -.6 v-12.3 q0 -.6 .6 -.6z" fill="#fff"/><path d="M21.3 86.6 v4.6 h4.7z" fill="#aeb6bd"/>
<g transform="translate(55.8,87.7) scale(1.0)"><path d="M0 1 q0 -1 1 -1 h3.6 l1.5 1.6 h5.9 q.9 0 .9 .9 v1.3 h-9.3 l-3.6 6.4z" fill="#fff"/><path d="M3.9 4.6 h10.7 l-2.7 6.2 h-11.6z" fill="#fff"/></g>
<g transform="translate(98.8,87.2) scale(1.0166666666666666)"><path d="M1.2 0 h8 l2.8 2.8 v8 q0 1.2 -1.2 1.2 h-9.6 q-1.2 0 -1.2 -1.2 v-9.6 q0 -1.2 1.2 -1.2z" fill="#9a9fa3"/><rect x="2" y="1.6" width="6.6" height="3" fill="#455364"/><circle cx="6" cy="8.3" r="1.9" fill="#455364"/></g>
<path d="M140.3 89.5 v9.2 q0 1.2 1.2 1.2 h9.4" fill="none" stroke="#9a9fa3" stroke-width="1.6"/><g transform="translate(143,86) scale(1.0)"><path d="M1.2 0 h8 l2.8 2.8 v8 q0 1.2 -1.2 1.2 h-9.6 q-1.2 0 -1.2 -1.2 v-9.6 q0 -1.2 1.2 -1.2z" fill="#9a9fa3"/><rect x="2" y="1.6" width="6.6" height="3" fill="#455364"/><circle cx="6" cy="8.3" r="1.9" fill="#455364"/></g>
<path d="M186.2 88.4 l8.2 4.7 l-8.2 4.7z" fill="#2FC4A5"/>
<path d="M233 98.2 h-7 q-1.4 0 -1.4 -1.4 v-7.2 q0 -1.4 1.4 -1.4 h12.2 q1.4 0 1.4 1.4 v3.2" fill="none" stroke="#fff" stroke-width="1.7"/><path d="M234.6 93.6 l6 3.5 l-6 3.5z" fill="#2FC4A5"/>
<path d="M272.5 97.6 h-4.3 q-1.4 0 -1.4 -1.4 v-7.2 q0 -1.4 1.4 -1.4 h11.6 q1.4 0 1.4 1.4 v4.2" fill="none" stroke="#fff" stroke-width="1.7"/><path d="M273.6 95 l4 2.7 l-4 2.7z M277.8 95 l4 2.7 l-4 2.7z" fill="#2FC4A5"/>
<path d="M310.2 86 q2 0 3.1 .9 q1.1 -.9 3.1 -.9 M310.2 98.8 q2 0 3.1 -.9 q1.1 .9 3.1 .9 M313.3 86.8 v11.2" fill="none" stroke="#fff" stroke-width="1.5"/><path d="M317.3 93.6 l6 3.5 l-6 3.5z" fill="#2FC4A5"/>
<rect x="351.2" y="88.5" width="1.7" height="9.5" fill="#259AE9"/><rect x="354.2" y="88.5" width="1.7" height="9.5" fill="#259AE9"/><path d="M357.2 88.5 l8.2 4.75 l-8.2 4.75z" fill="#259AE9"/>
<path d="M394.8 94.6 q2 -5.2 6.2 -5.2 q3.6 0 5.6 3.6" fill="none" stroke="#259AE9" stroke-width="1.6"/><path d="M403.2 94.2 l5.2 .6 l-.4 -5.2z" fill="#259AE9"/><circle cx="400.6" cy="96.3" r="1.3" fill="#259AE9"/>
<path d="M442.8 86 v9.4 M438.6 91.2 l4.2 4.4 l4.2 -4.4" fill="none" stroke="#259AE9" stroke-width="1.6"/><circle cx="442.8" cy="98.9" r="1.3" fill="#259AE9"/>
<path d="M484.8 96 v-8.6 M480.6 91.4 l4.2 -4.4 l4.2 4.4" fill="none" stroke="#259AE9" stroke-width="1.6"/><circle cx="484.8" cy="98.9" r="1.3" fill="#259AE9"/>
<path d="M520.8 89.6 l6.2 3.9 l-6.2 3.9z M527.2 89.6 l6.2 3.9 l-6.2 3.9z" fill="#259AE9"/>
<rect x="565" y="89.3" width="8.3" height="8.2" fill="#259AE9"/>
<rect x="604.3" y="85.8" width="14.8" height="14.3" rx="1.6" fill="#fff"/><rect x="606.2" y="87.8" width="4.4" height="10.3" fill="#455364"/><rect x="612.3" y="87.8" width="4.9" height="10.3" fill="#4d5a69"/><path d="M606.2 90.6 h1.5 M606.2 95.2 h1.5 M608.6 87.8 v1.2 M608.6 98.1 v-1.2" stroke="#fff" stroke-width="1.2"/>
<path d="M648.2 99.3 l7 -7" stroke="#fff" stroke-width="3.2" stroke-linecap="round"/><circle cx="657.3" cy="90" r="4.2" fill="#fff"/><path d="M657.9 89.4 l4.6 -4.6" stroke="#455364" stroke-width="3"/>
<g transform="translate(688.4,86) scale(1.176923076923077)"><path d="M6.3 0.4 C3.6 0.4 3.8 1.6 3.8 1.6 L3.8 3 L6.5 3 L6.5 3.5 L2.4 3.5 C0.6 3.5 0.4 5 0.4 6.4 C0.4 7.9 0.8 9.3 2.3 9.3 L3.4 9.3 L3.4 7.6 C3.4 6.4 4.4 5.7 5.4 5.7 L7.8 5.7 C8.8 5.7 9.3 5 9.3 4.2 L9.3 1.8 C9.3 1 8.4 0.4 6.3 0.4Z M4.9 1.3 A0.55 0.55 0 1 1 4.9 2.4 A0.55 0.55 0 1 1 4.9 1.3Z" fill="#3B7DB5" fill-rule="evenodd"/><path d="M6.7 12.6 C9.4 12.6 9.2 11.4 9.2 11.4 L9.2 10 L6.5 10 L6.5 9.5 L10.6 9.5 C12.4 9.5 12.6 8 12.6 6.6 C12.6 5.1 12.2 3.7 10.7 3.7 L9.6 3.7 L9.6 5.4 C9.6 6.6 8.6 7.3 7.6 7.3 L5.2 7.3 C4.2 7.3 3.7 8 3.7 8.8 L3.7 11.2 C3.7 12 4.6 12.6 6.7 12.6Z M8.1 11.7 A0.55 0.55 0 1 1 8.1 10.6 A0.55 0.55 0 1 1 8.1 11.7Z" fill="#F7C93E" fill-rule="evenodd"/></g>
<g transform="translate(1429.5,87.5) scale(1.0)"><path d="M0 1 q0 -1 1 -1 h3.6 l1.5 1.6 h5.9 q.9 0 .9 .9 v1.3 h-9.3 l-3.6 6.4z" fill="#fff"/><path d="M3.9 4.6 h10.7 l-2.7 6.2 h-11.6z" fill="#fff"/></g>
<g transform="translate(26.5,566) scale(1.0)"><path d="M6.3 0.4 C3.6 0.4 3.8 1.6 3.8 1.6 L3.8 3 L6.5 3 L6.5 3.5 L2.4 3.5 C0.6 3.5 0.4 5 0.4 6.4 C0.4 7.9 0.8 9.3 2.3 9.3 L3.4 9.3 L3.4 7.6 C3.4 6.4 4.4 5.7 5.4 5.7 L7.8 5.7 C8.8 5.7 9.3 5 9.3 4.2 L9.3 1.8 C9.3 1 8.4 0.4 6.3 0.4Z M4.9 1.3 A0.55 0.55 0 1 1 4.9 2.4 A0.55 0.55 0 1 1 4.9 1.3Z" fill="#3B7DB5" fill-rule="evenodd"/><path d="M6.7 12.6 C9.4 12.6 9.2 11.4 9.2 11.4 L9.2 10 L6.5 10 L6.5 9.5 L10.6 9.5 C12.4 9.5 12.6 8 12.6 6.6 C12.6 5.1 12.2 3.7 10.7 3.7 L9.6 3.7 L9.6 5.4 C9.6 6.6 8.6 7.3 7.6 7.3 L5.2 7.3 C4.2 7.3 3.7 8 3.7 8.8 L3.7 11.2 C3.7 12 4.6 12.6 6.7 12.6Z M8.1 11.7 A0.55 0.55 0 1 1 8.1 10.6 A0.55 0.55 0 1 1 8.1 11.7Z" fill="#F7C93E" fill-rule="evenodd"/></g>
<path transform="translate(1478.8,93.2) scale(1.0)" d="M0 -5.4 l5.2 5.4 h-3 v5.2 h-4.4 v-5.2 h-3z" fill="#fff"/>
<path transform="translate(17.2,127) scale(-1,1)" d="M4 0 l-4 -3.6 v2.2 h-3.6 v2.8 h3.6 v2.2z" fill="#fff"/>
<path transform="translate(53,127) scale(1,1)" d="M4 0 l-4 -3.6 v2.2 h-3.6 v2.8 h3.6 v2.2z" fill="#6e7a85"/>
<path transform="translate(90.3,127.3) scale(0.72)" d="M0 -5.4 l5.2 5.4 h-3 v5.2 h-4.4 v-5.2 h-3z" fill="#fff"/>
<path d="M122.6 122.6 h8.8 l-3.4 4.2 v4.6 h-2 v-4.6z" fill="#fff"/>
<path d="M214.6 124.3 h8.8 M214.6 127 h8.8 M214.6 129.7 h8.8" stroke="#E0E1E3" stroke-width="1.3"/>
<path d="M12.6 543 Q12.6 541.6 14.2 541.4 L16.4 539.7 Q17.4 539.6 17.1 540.6 L16.5 542.4 H21.2 A1.05 1.05 0 0 1 21.2 544.5 H18.6 Q18.9 547.4 16.6 547.4 H14.6 Q12.6 547.4 12.6 545.4Z" fill="#fff"/>
<path d="M50.099999999999994 545.8000000000001 V540.5 Q50.099999999999994 539.7 50.89999999999999 539.7 H56.199999999999996" fill="none" stroke="#E0E1E3" stroke-width="1.1"/><path d="M51.99999999999999 547.6 V542.4000000000001 Q51.99999999999999 541.6 52.8 541.6 H57.99999999999999" fill="none" stroke="#E0E1E3" stroke-width="1.1"/><rect x="53.699999999999996" y="543.3000000000001" width="5.5" height="5.5" rx=".8" fill="#E0E1E3"/><path d="M54.89999999999999 546.0500000000001 h3.1" stroke="#18232B" stroke-width="1"/>
<path d="M87.1 545.8000000000001 V540.5 Q87.1 539.7 87.89999999999999 539.7 H93.19999999999999" fill="none" stroke="#E0E1E3" stroke-width="1.1"/><path d="M89.0 547.6 V542.4000000000001 Q89.0 541.6 89.8 541.6 H95.0" fill="none" stroke="#E0E1E3" stroke-width="1.1"/><rect x="90.69999999999999" y="543.3000000000001" width="5.5" height="5.5" rx=".8" fill="#E0E1E3"/><path d="M91.89999999999999 546.0500000000001 h3.1 M93.44999999999999 544.5 v3.1" stroke="#18232B" stroke-width="1"/>
<path d="M123 546.5 h5.4 v-5" fill="none" stroke="#E0E1E3" stroke-width="1.2"/><path d="M125.8 542.4 l2.6 -2.8 l2.6 2.8z" fill="#E0E1E3"/>
<circle cx="166" cy="543.5" r=".95" fill="#E0E1E3"/><circle cx="169.2" cy="543.5" r=".95" fill="#E0E1E3"/><circle cx="172.4" cy="543.5" r=".95" fill="#E0E1E3"/>
<path d="M214.6 540.8 h8.8 M214.6 543.5 h8.8 M214.6 546.2 h8.8" stroke="#E0E1E3" stroke-width="1.3"/>
<rect x="253.6" y="144.5" width="11.6" height="9.6" rx="1" fill="none" stroke="#fff" stroke-width="1.4"/><rect x="259.4" y="144.5" width="5.8" height="3" fill="#fff"/>
<rect x="254.2" y="247.29999999999998" width="11.6" height="9.6" rx="1" fill="none" stroke="#fff" stroke-width="1.4"/><rect x="260.0" y="247.29999999999998" width="5.8" height="3" fill="#fff"/>
<rect x="856.4000000000001" y="538.7" width="11.6" height="9.6" rx="1" fill="none" stroke="#fff" stroke-width="1.4"/><rect x="862.2" y="538.7" width="5.8" height="3" fill="#fff"/>
<path d="M818.2 147.5 h8.8 M818.2 150.2 h8.8 M818.2 152.89999999999998 h8.8" stroke="#E0E1E3" stroke-width="1.3"/>
<path d="M817.6 248.60000000000002 h8.8 M817.6 251.3 h8.8 M817.6 254.0 h8.8" stroke="#E0E1E3" stroke-width="1.3"/>
<path d="M1478.1999999999998 540.5999999999999 h8.8 M1478.1999999999998 543.3 h8.8 M1478.1999999999998 546.0 h8.8" stroke="#E0E1E3" stroke-width="1.3"/>
<path d="M1478.3999999999999 124.5 h8.8 M1478.3999999999999 127.2 h8.8 M1478.3999999999999 129.9 h8.8" stroke="#E0E1E3" stroke-width="1.3"/>
<path transform="translate(736.6,251.6) scale(1.0)" d="M-3.4 -3 h6.8 v6.6 q0 1 -1 1 h-4.8 q-1 0 -1 -1z M-4 -4.9 h2.4 l.6 -.8 h2 l.6 .8 h2.4 v1.2 h-8z" fill="#fff"/>
<rect x="770" y="248.6" width="6.6" height="6.2" fill="#8b949c"/>
<g transform="translate(858.5,123.2) scale(0.6833333333333332)"><path d="M1.2 0 h8 l2.8 2.8 v8 q0 1.2 -1.2 1.2 h-9.6 q-1.2 0 -1.2 -1.2 v-9.6 q0 -1.2 1.2 -1.2z" fill="#fff"/><rect x="2" y="1.6" width="6.6" height="3" fill="#18232B"/><circle cx="6" cy="8.3" r="1.9" fill="#18232B"/></g>
<path d="M894.6 125 v5.6 q0 1 1 1 h5.8" fill="none" stroke="#fff" stroke-width="1.3"/><g transform="translate(896.5,122) scale(0.7000000000000001)"><path d="M1.2 0 h8 l2.8 2.8 v8 q0 1.2 -1.2 1.2 h-9.6 q-1.2 0 -1.2 -1.2 v-9.6 q0 -1.2 1.2 -1.2z" fill="#fff"/><rect x="2" y="1.6" width="6.6" height="3" fill="#18232B"/><circle cx="6" cy="8.3" r="1.9" fill="#18232B"/></g>
<rect x="931.4" y="122.4" width="6.2" height="7.6" rx=".8" fill="none" stroke="#fff" stroke-width="1.1"/><rect x="933.8" y="124.4" width="6.4" height="7.8" rx=".8" fill="#18232B" stroke="#fff" stroke-width="1.2"/>
<path transform="translate(972.5,127.4) scale(0.92)" d="M-3.4 -3 h6.8 v6.6 q0 1 -1 1 h-4.8 q-1 0 -1 -1z M-4 -4.9 h2.4 l.6 -.8 h2 l.6 .8 h2.4 v1.2 h-8z" fill="#fff"/>
<path d="M1006 123.2 l7.4 7.6 M1013.4 123.2 l-7.4 7.6" stroke="#fff" stroke-width="1.5"/><circle cx="1006.6" cy="123.8" r="1.3" fill="#fff"/><circle cx="1012.8" cy="130.2" r="1.3" fill="#fff"/><path d="M1011 122.6 l2.6 2.6" stroke="#fff" stroke-width="2"/>
<path transform="translate(1046.3,127.5) scale(-1,1)" d="M4 0 l-4 -3.6 v2.2 h-3.6 v2.8 h3.6 v2.2z" fill="#fff"/>
<path transform="translate(1083,127.5) scale(1,1)" d="M4 0 l-4 -3.6 v2.2 h-3.6 v2.8 h3.6 v2.2z" fill="#fff"/>
<path d="M1114.2 125.6 h6.4 M1117.4 122.4 v6.4" stroke="#fff" stroke-width="1.3"/><circle cx="1121" cy="128.8" r="1.9" fill="none" stroke="#fff" stroke-width="1"/><path d="M1122.4 130.2 l2.2 2.2" stroke="#fff" stroke-width="1.2"/>
<path d="M1151 125.2 h6.6" stroke="#fff" stroke-width="1.3"/><circle cx="1157.6" cy="128.8" r="1.9" fill="none" stroke="#fff" stroke-width="1"/><path d="M1159 130.2 l2.2 2.2" stroke="#fff" stroke-width="1.2"/>
<path d="M1034.6 809 l2.6 -2.4 l2.2 2.2 M1038.2 813.4 l2 1.2 l3 -4.2" fill="none" stroke="#E0E1E3" stroke-width="1.1"/>
<path d="M1148.2 806.6 l4 2 v4.2 l-4 2 l-4 -2 v-4.2z M1144.2 808.6 l4 2 l4 -2 M1148.2 810.6 v4" fill="none" stroke="#E0E1E3" stroke-width="1"/>
<path transform="translate(292.2,220)" d="M0 0 V15.6 L3.6 12.3 L6.3 18 L8.6 17 L6 11.5 H10.8Z" fill="#fff" stroke="#111" stroke-width=".9" stroke-linejoin="round"/>
<path d="M614.2 492.4 q1.8 0 2.7 1 q.9 -1 2.7 -1 M616.9 493 v12" fill="none" stroke="#a4acb4" stroke-width="1.2"/></svg>
<!--MORE-->
</body></html>
